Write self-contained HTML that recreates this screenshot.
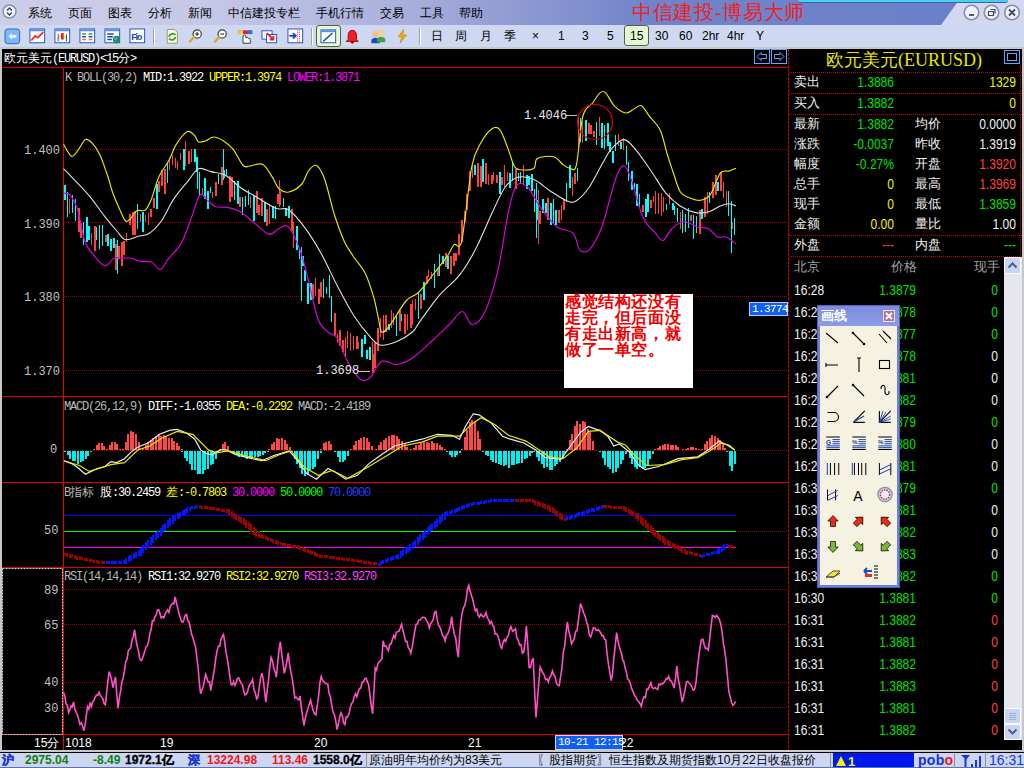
<!DOCTYPE html>
<html><head><meta charset="utf-8">
<style>
*{margin:0;padding:0;box-sizing:border-box}
html,body{width:1024px;height:768px;overflow:hidden;background:#000;font-family:"Liberation Sans",sans-serif}
.a{position:absolute;white-space:nowrap}
.mono{font-family:"Liberation Mono",monospace}
#menubar{position:absolute;left:0;top:0;width:1024px;height:25px;background:linear-gradient(90deg,#cccee8 0px,#c6c8e6 200px,#aab0dc 400px,#8a96d0 540px,#7084ca 650px,#6a80ca 940px);}
#menucut{position:absolute;left:0;top:0;width:1024px;height:25px;background:#d2d8f0;clip-path:polygon(959px 0,1024px 0,1024px 25px,941px 25px)}
#cyanbar{position:absolute;left:798px;top:0;width:210px;height:3px;background:#48d0f0;border-bottom:1px solid #4060a8;border-radius:0 0 3px 3px}
#toolbar{position:absolute;left:0;top:25px;width:1024px;height:22px;background:#ced8f0}
.menu{position:absolute;top:5px;font-size:12px;color:#000;line-height:16px}
.tb{position:absolute;top:29px;font-size:12px;color:#000;line-height:14px}
.sep{position:absolute;top:28px;width:2px;height:17px;border-left:1px solid #a0a0b8;border-right:1px solid #fff}
#frame{position:absolute;left:0;top:47px;width:1024px;height:705px;border-left:2px solid #c8c8c8;border-top:2px solid #c8c8c8;border-right:2px solid #c8c8c8;border-bottom:2px solid #c8c8c8}
.lab{position:absolute;font-family:"Liberation Mono",monospace;font-size:12px;color:#c0c0c0;line-height:12px}
.ttl{position:absolute;font-family:"Liberation Mono",monospace;font-size:12px;line-height:12px;letter-spacing:-1.2px;white-space:pre}
.cj{font-size:12px;letter-spacing:0;font-family:"Liberation Sans",sans-serif}
.rp{position:absolute;font-size:13px;line-height:14px}
.rv{position:absolute;font-size:14px;line-height:14px;text-align:right;transform:scaleX(0.86);transform-origin:right center}
.rt{position:absolute;font-size:14px;line-height:14px;transform:scaleX(0.86);transform-origin:left center}
#status{position:absolute;left:0;top:753px;width:1024px;height:15px;background:#cdd6f0;border-bottom:1px solid #6070a8}
.st{position:absolute;top:753px;font-size:12px;line-height:15px;font-weight:bold}
</style></head><body>
<div id="menubar"></div>
<div id="menucut"></div>
<div id="cyanbar"></div>
<div id="toolbar"></div>
<!-- menu items -->
<svg class="a" style="left:2px;top:4px" width="16" height="16"><circle cx="7.5" cy="7.5" r="6.5" fill="#f4f4fa" stroke="#8890b0" stroke-width="1.5"/><path d="M5 6.5 L7.5 4 L10 6.5 M5 8.5 L7.5 11 L10 8.5" fill="none" stroke="#304080" stroke-width="1.4"/></svg>
<div class="menu" style="left:28px">系统</div>
<div class="menu" style="left:68px">页面</div>
<div class="menu" style="left:108px">图表</div>
<div class="menu" style="left:148px">分析</div>
<div class="menu" style="left:188px">新闻</div>
<div class="menu" style="left:228px">中信建投专栏</div>
<div class="menu" style="left:316px">手机行情</div>
<div class="menu" style="left:380px">交易</div>
<div class="menu" style="left:420px">工具</div>
<div class="menu" style="left:459px">帮助</div>
<div class="a" style="left:632px;top:1px;font-family:'Liberation Serif',serif;font-size:20px;line-height:22px;color:#f02020;letter-spacing:0.7px">中信建投-博易大师</div>
<!-- window buttons -->
<svg class="a" style="left:962px;top:4px" width="62" height="18">
<g fill="#f0f0f4" stroke="#8a8fa8" stroke-width="1.6"><circle cx="9.5" cy="8.5" r="7.3"/><circle cx="29.5" cy="8.5" r="7.3"/><circle cx="50" cy="8.5" r="7.3"/></g>
<path d="M7 11h5" stroke="#404868" stroke-width="1.8"/>
<path d="M26.5 7.5h5v4h-5z M28.5 5.5h4.5v4" fill="none" stroke="#404868" stroke-width="1.2"/>
<path d="M47 5.5l6 6 M53 5.5l-6 6" stroke="#404868" stroke-width="1.8"/>
</svg>
<!-- toolbar -->
<svg class="a" style="left:4px;top:28px" width="17" height="17" viewBox="0 0 17 17"><g transform="translate(0.5 0.5) scale(0.92)"><rect x="0.5" y="0.5" width="16" height="16" rx="3" fill="#80b8f0" stroke="#3060b0"/><path d="M4 8.5L8 5V7H13V10H8V12Z" fill="#e8f4ff"/></g></svg>
<svg class="a" style="left:29px;top:28px" width="17" height="17" viewBox="0 0 17 17"><g transform="translate(0.5 0.5) scale(0.92)"><rect x="0.5" y="0.5" width="16" height="15" fill="#fff" stroke="#1848c0"/><rect x="1" y="1" width="15" height="2" fill="#5890e0"/><path d="M2 13L6 8L9 10L15 4" fill="none" stroke="#f02020" stroke-width="1.8"/></g></svg>
<svg class="a" style="left:54px;top:28px" width="17" height="17" viewBox="0 0 17 17"><g transform="translate(0.5 0.5) scale(0.92)"><rect x="0.5" y="0.5" width="16" height="15" fill="#fff" stroke="#1848c0"/><rect x="1" y="1" width="15" height="2" fill="#5890e0"/><path d="M3 12C6 7 11 7 14 12" stroke="#f0e000" fill="none" stroke-width="1.3"/><rect x="7" y="5" width="3" height="7" fill="#f02020"/><path d="M4 6V14M13 6V14" stroke="#1848c0"/></g></svg>
<svg class="a" style="left:79px;top:28px" width="17" height="17" viewBox="0 0 17 17"><g transform="translate(0.5 0.5) scale(0.92)"><rect x="0.5" y="0.5" width="16" height="15" fill="#fff" stroke="#1848c0"/><rect x="1" y="1" width="15" height="2" fill="#5890e0"/><path d="M3 6H7M10 6H14" stroke="#30a030" stroke-width="1.5"/><path d="M3 9H7M10 9H14" stroke="#1848c0" stroke-width="1.5"/><path d="M3 12H7M10 12H14" stroke="#f07020" stroke-width="1.5"/></g></svg>
<svg class="a" style="left:104px;top:28px" width="17" height="17" viewBox="0 0 17 17"><g transform="translate(0.5 0.5) scale(0.92)"><rect x="0.5" y="0.5" width="16" height="15" fill="#fff" stroke="#1848c0"/><rect x="1" y="1" width="15" height="2" fill="#5890e0"/><path d="M3 6H10M3 9H9M3 12H8" stroke="#1848c0" stroke-width="1.5"/><circle cx="13" cy="12" r="4" fill="#209040"/><circle cx="12" cy="11" r="2" fill="#40a0f0"/></g></svg>
<svg class="a" style="left:129px;top:28px" width="17" height="17" viewBox="0 0 17 17"><g transform="translate(0.5 0.5) scale(0.92)"><rect x="0.5" y="0.5" width="16" height="15" fill="#fff" stroke="#1848c0"/><text x="2" y="13" font-size="10" font-weight="bold" fill="#1848c0" font-family="Liberation Sans" textLength="12">Fio</text></g></svg>
<svg class="a" style="left:164px;top:28px" width="17" height="17" viewBox="0 0 17 17"><g transform="translate(0.5 0.5) scale(0.92)"><path d="M3 1H11L14 4V16H3Z" fill="#fff8e0" stroke="#a09060"/><path d="M5 9A4 4 0 0 1 12 7M12 9A4 4 0 0 1 5 11" fill="none" stroke="#30a030" stroke-width="2"/></g></svg>
<svg class="a" style="left:187px;top:28px" width="17" height="17" viewBox="0 0 17 17"><g transform="translate(0.5 0.5) scale(0.92)"><circle cx="10.5" cy="6" r="4.5" fill="#fff" stroke="#404040" stroke-width="1.3"/><path d="M8.5 6H12.5M10.5 4V8" stroke="#000"/><path d="M7.5 9L2 15" stroke="#e0a020" stroke-width="2.5"/></g></svg>
<svg class="a" style="left:212px;top:28px" width="17" height="17" viewBox="0 0 17 17"><g transform="translate(0.5 0.5) scale(0.92)"><circle cx="10.5" cy="6" r="4.5" fill="#fff" stroke="#404040" stroke-width="1.3"/><path d="M8.5 6H12.5" stroke="#000"/><path d="M7.5 9L2 15" stroke="#e0a020" stroke-width="2.5"/></g></svg>
<svg class="a" style="left:237px;top:28px" width="17" height="17" viewBox="0 0 17 17"><g transform="translate(0.5 0.5) scale(0.92)"><rect x="1" y="2" width="15" height="4" fill="#f02020"/><rect x="1" y="2" width="5" height="4" fill="#f0d040"/><rect x="11" y="2" width="5" height="4" fill="#3070e0"/><path d="M6 16V8Q8 6 9 8V10Q11 9 12 11Q14 10 14 12V16Z" fill="#fff" stroke="#303030"/></g></svg>
<svg class="a" style="left:261px;top:28px" width="17" height="17" viewBox="0 0 17 17"><g transform="translate(0.5 0.5) scale(0.92)"><rect x="0.5" y="2.5" width="11" height="9" fill="#fff" stroke="#1848c0"/><rect x="5.5" y="6.5" width="11" height="9" fill="#fff" stroke="#1848c0"/><path d="M6 5L13 12M13 8V12H9" stroke="#f02020" stroke-width="2" fill="none"/></g></svg>
<svg class="a" style="left:287px;top:28px" width="17" height="17" viewBox="0 0 17 17"><g transform="translate(0.5 0.5) scale(0.92)"><rect x="0.5" y="0.5" width="16" height="15" fill="#fff" stroke="#1848c0"/><path d="M11 2V15M13 2V15" stroke="#f02020" stroke-dasharray="1 1"/><path d="M2 8H9M6 5L9 8L6 11" stroke="#1848c0" stroke-width="2" fill="none"/></g></svg>
<div class="a" style="left:316px;top:25px;width:25px;height:22px;background:#e4f8d4;border:1px solid #506048;border-radius:3px"></div>
<svg class="a" style="left:320px;top:28px" width="17" height="17" viewBox="0 0 17 17"><g transform="translate(0.5 0.5) scale(0.92)"><rect x="0.5" y="1.5" width="16" height="14" fill="#fff" stroke="#1848c0"/><rect x="1" y="2" width="15" height="2" fill="#5890e0"/><path d="M3 14L13 5" stroke="#1848c0" stroke-width="1.5"/></g></svg>
<svg class="a" style="left:344px;top:28px" width="17" height="17" viewBox="0 0 17 17"><g transform="translate(0.5 0.5) scale(0.92)"><path d="M8.5 2C12 2 13 5 13 8V12L15 14H2L4 12V8C4 5 5 2 8.5 2Z" fill="#f02020" stroke="#a00000"/><circle cx="8.5" cy="15" r="1.5" fill="#a00000"/></g></svg>
<svg class="a" style="left:370px;top:28px" width="17" height="17" viewBox="0 0 17 17"><g transform="translate(0.5 0.5) scale(0.92)"><circle cx="5.5" cy="6" r="3.5" fill="#f0c090"/><path d="M1 16V12Q5.5 8 10 12V16Z" fill="#1848c0"/><circle cx="11.5" cy="5" r="3.5" fill="#f0d0a0"/><path d="M7 15V11Q11.5 7 16 11V15Z" fill="#40a040"/></g></svg>
<svg class="a" style="left:394px;top:28px" width="17" height="17" viewBox="0 0 17 17"><g transform="translate(0.5 0.5) scale(0.92)"><path d="M10 1L4 9H8L6 16L13 7H9Z" fill="#f0b000" stroke="#c07000" stroke-width="0.6"/></g></svg>
<div class="tb" style="left:431px">日</div>
<div class="tb" style="left:455px">周</div>
<div class="tb" style="left:480px">月</div>
<div class="tb" style="left:504px">季</div>
<div class="tb" style="left:532px">×</div>
<div class="tb" style="left:558px">1</div>
<div class="tb" style="left:582px">3</div>
<div class="tb" style="left:607px">5</div>
<div class="a" style="left:624px;top:25px;width:25px;height:21px;background:#e4f8d4;border:1px solid #50604a;border-radius:3px"></div>
<div class="tb" style="left:630px">15</div>
<div class="tb" style="left:655px">30</div>
<div class="tb" style="left:679px">60</div>
<div class="tb" style="left:702px">2hr</div>
<div class="tb" style="left:727px">4hr</div>
<div class="tb" style="left:756px">Y</div>
<div class="sep" style="left:153px"></div>
<div class="sep" style="left:311px"></div>
<div class="sep" style="left:419px"></div>
<div id="frame"></div>
<svg width="1024" height="768" style="position:absolute;left:0;top:0"><line x1="64" y1="149.5" x2="788" y2="149.5" stroke="#a00000" stroke-dasharray="1 1"/><line x1="64" y1="222.5" x2="788" y2="222.5" stroke="#a00000" stroke-dasharray="1 1"/><line x1="64" y1="296.5" x2="788" y2="296.5" stroke="#a00000" stroke-dasharray="1 1"/><line x1="64" y1="370.5" x2="788" y2="370.5" stroke="#a00000" stroke-dasharray="1 1"/><line x1="64" y1="450.5" x2="788" y2="450.5" stroke="#a00000" stroke-dasharray="1 1"/><line x1="736" y1="531.5" x2="788" y2="531.5" stroke="#a00000" stroke-dasharray="1 1"/><line x1="64" y1="589.5" x2="788" y2="589.5" stroke="#a00000" stroke-dasharray="1 1"/><line x1="64" y1="624.5" x2="788" y2="624.5" stroke="#a00000" stroke-dasharray="1 1"/><line x1="64" y1="682.5" x2="788" y2="682.5" stroke="#a00000" stroke-dasharray="1 1"/><line x1="64" y1="707.5" x2="788" y2="707.5" stroke="#a00000" stroke-dasharray="1 1"/><line x1="64" y1="515.5" x2="736" y2="515.5" stroke="#0000ff"/><line x1="64" y1="531.5" x2="736" y2="531.5" stroke="#00ff00"/><line x1="64" y1="547.5" x2="736" y2="547.5" stroke="#ff00ff"/><line x1="2" y1="67.5" x2="788" y2="67.5" stroke="#e00000"/><line x1="2" y1="396.5" x2="788" y2="396.5" stroke="#e00000"/><line x1="2" y1="482.5" x2="788" y2="482.5" stroke="#e00000"/><line x1="2" y1="567.5" x2="788" y2="567.5" stroke="#e00000"/><line x1="2" y1="734.5" x2="788" y2="734.5" stroke="#e00000"/><line x1="63.5" y1="67" x2="63.5" y2="750" stroke="#e80000"/><line x1="788.5" y1="49" x2="788.5" y2="750" stroke="#d00000" stroke-dasharray="3 1"/><rect x="64" y="185" width="2" height="15" fill="#00ffff"/><rect x="67" y="192" width="1" height="25" fill="#00ffff"/><rect x="69" y="199" width="1" height="15" fill="#ff4040"/><rect x="72" y="195" width="1" height="18" fill="#00ffff"/><rect x="75" y="199" width="1" height="22" fill="#00ffff"/><rect x="78" y="208" width="2" height="24" fill="#ff4040"/><rect x="80" y="223" width="2" height="15" fill="#ff4040"/><rect x="83" y="222" width="1" height="23" fill="#00ffff"/><rect x="86" y="217" width="2" height="25" fill="#00ffff"/><rect x="88" y="226" width="2" height="14" fill="#00ffff"/><rect x="91" y="233" width="1" height="12" fill="#ff4040"/><rect x="94" y="226" width="2" height="25" fill="#ff4040"/><rect x="96" y="227" width="1" height="13" fill="#00ffff"/><rect x="99" y="225" width="1" height="24" fill="#00ffff"/><rect x="102" y="225" width="1" height="21" fill="#00ffff"/><rect x="105" y="235" width="2" height="7" fill="#ff4040"/><rect x="107" y="234" width="2" height="12" fill="#00ffff"/><rect x="110" y="239" width="2" height="12" fill="#00ffff"/><rect x="113" y="238" width="2" height="10" fill="#00ffff"/><rect x="115" y="244" width="2" height="26" fill="#ff4040"/><rect x="118" y="246" width="2" height="13" fill="#ff4040"/><rect x="121" y="242" width="2" height="24" fill="#ff4040"/><rect x="123" y="241" width="2" height="14" fill="#ff4040"/><rect x="126" y="233" width="1" height="9" fill="#ff4040"/><rect x="129" y="214" width="2" height="11" fill="#ff4040"/><rect x="132" y="212" width="2" height="23" fill="#ff4040"/><rect x="134" y="211" width="2" height="24" fill="#ff4040"/><rect x="137" y="204" width="1" height="25" fill="#00ffff"/><rect x="140" y="214" width="1" height="8" fill="#ff4040"/><rect x="142" y="212" width="2" height="20" fill="#00ffff"/><rect x="145" y="215" width="1" height="7" fill="#ff4040"/><rect x="148" y="213" width="1" height="12" fill="#ff4040"/><rect x="150" y="209" width="2" height="8" fill="#ff4040"/><rect x="153" y="198" width="2" height="10" fill="#ff4040"/><rect x="156" y="184" width="2" height="25" fill="#00ffff"/><rect x="158" y="181" width="2" height="11" fill="#ff4040"/><rect x="161" y="170" width="2" height="16" fill="#ff4040"/><rect x="164" y="169" width="2" height="25" fill="#ff4040"/><rect x="167" y="163" width="1" height="20" fill="#00ffff"/><rect x="169" y="160" width="1" height="10" fill="#ff4040"/><rect x="172" y="155" width="1" height="10" fill="#ff4040"/><rect x="175" y="158" width="1" height="10" fill="#ff4040"/><rect x="177" y="161" width="1" height="9" fill="#ff4040"/><rect x="180" y="153" width="1" height="7" fill="#ff4040"/><rect x="183" y="149" width="2" height="21" fill="#00ffff"/><rect x="185" y="141" width="1" height="25" fill="#ff4040"/><rect x="188" y="151" width="2" height="13" fill="#ff4040"/><rect x="191" y="149" width="1" height="13" fill="#ff4040"/><rect x="194" y="149" width="2" height="13" fill="#00ffff"/><rect x="196" y="157" width="2" height="15" fill="#00ffff"/><rect x="199" y="172" width="1" height="24" fill="#00ffff"/><rect x="202" y="188" width="1" height="7" fill="#ff4040"/><rect x="204" y="178" width="2" height="21" fill="#00ffff"/><rect x="207" y="191" width="2" height="18" fill="#00ffff"/><rect x="210" y="187" width="1" height="6" fill="#00ffff"/><rect x="212" y="192" width="1" height="6" fill="#ff4040"/><rect x="215" y="182" width="2" height="14" fill="#ff4040"/><rect x="218" y="174" width="1" height="10" fill="#00ffff"/><rect x="221" y="167" width="2" height="18" fill="#ff4040"/><rect x="223" y="170" width="2" height="8" fill="#00ffff"/><rect x="226" y="169" width="1" height="7" fill="#00ffff"/><rect x="229" y="176" width="2" height="26" fill="#ff4040"/><rect x="231" y="177" width="2" height="20" fill="#ff4040"/><rect x="234" y="181" width="1" height="19" fill="#00ffff"/><rect x="237" y="181" width="2" height="23" fill="#00ffff"/><rect x="239" y="197" width="2" height="10" fill="#ff4040"/><rect x="242" y="197" width="1" height="18" fill="#00ffff"/><rect x="245" y="196" width="1" height="11" fill="#00ffff"/><rect x="248" y="190" width="1" height="15" fill="#00ffff"/><rect x="250" y="196" width="1" height="12" fill="#ff4040"/><rect x="253" y="196" width="2" height="25" fill="#00ffff"/><rect x="256" y="191" width="2" height="22" fill="#ff4040"/><rect x="258" y="205" width="2" height="10" fill="#ff4040"/><rect x="261" y="198" width="2" height="18" fill="#ff4040"/><rect x="264" y="202" width="2" height="20" fill="#00ffff"/><rect x="266" y="209" width="2" height="17" fill="#ff4040"/><rect x="269" y="205" width="1" height="19" fill="#ff4040"/><rect x="272" y="206" width="2" height="12" fill="#00ffff"/><rect x="275" y="206" width="1" height="13" fill="#00ffff"/><rect x="277" y="194" width="2" height="10" fill="#ff4040"/><rect x="280" y="191" width="1" height="14" fill="#ff4040"/><rect x="283" y="198" width="1" height="9" fill="#00ffff"/><rect x="285" y="208" width="2" height="8" fill="#00ffff"/><rect x="288" y="206" width="2" height="12" fill="#00ffff"/><rect x="291" y="209" width="2" height="22" fill="#ff4040"/><rect x="293" y="222" width="1" height="26" fill="#ff4040"/><rect x="296" y="226" width="2" height="24" fill="#00ffff"/><rect x="299" y="249" width="1" height="10" fill="#00ffff"/><rect x="302" y="256" width="2" height="10" fill="#00ffff"/><rect x="304" y="270" width="2" height="11" fill="#00ffff"/><rect x="307" y="283" width="2" height="21" fill="#00ffff"/><rect x="310" y="283" width="2" height="17" fill="#00ffff"/><rect x="312" y="284" width="2" height="15" fill="#ff4040"/><rect x="315" y="278" width="1" height="18" fill="#ff4040"/><rect x="318" y="289" width="2" height="15" fill="#ff4040"/><rect x="320" y="282" width="2" height="15" fill="#ff4040"/><rect x="323" y="279" width="1" height="19" fill="#00ffff"/><rect x="326" y="287" width="1" height="7" fill="#00ffff"/><rect x="329" y="275" width="1" height="23" fill="#00ffff"/><rect x="331" y="296" width="1" height="26" fill="#00ffff"/><rect x="334" y="313" width="2" height="22" fill="#ff4040"/><rect x="337" y="334" width="1" height="9" fill="#ff4040"/><rect x="339" y="330" width="2" height="16" fill="#ff4040"/><rect x="342" y="340" width="2" height="12" fill="#ff4040"/><rect x="345" y="337" width="1" height="20" fill="#ff4040"/><rect x="347" y="331" width="1" height="17" fill="#ff4040"/><rect x="350" y="333" width="1" height="18" fill="#ff4040"/><rect x="353" y="336" width="1" height="14" fill="#ff4040"/><rect x="356" y="336" width="2" height="13" fill="#ff4040"/><rect x="358" y="342" width="1" height="7" fill="#ff4040"/><rect x="361" y="339" width="2" height="18" fill="#00ffff"/><rect x="364" y="335" width="2" height="9" fill="#00ffff"/><rect x="366" y="350" width="2" height="9" fill="#00ffff"/><rect x="369" y="347" width="2" height="13" fill="#00ffff"/><rect x="372" y="354" width="2" height="18" fill="#ff4040"/><rect x="374" y="343" width="2" height="25" fill="#ff4040"/><rect x="377" y="328" width="2" height="23" fill="#ff4040"/><rect x="380" y="318" width="1" height="19" fill="#ff4040"/><rect x="383" y="315" width="1" height="25" fill="#ff4040"/><rect x="385" y="315" width="2" height="17" fill="#ff4040"/><rect x="388" y="324" width="2" height="6" fill="#00ffff"/><rect x="391" y="310" width="1" height="18" fill="#ff4040"/><rect x="393" y="313" width="1" height="12" fill="#ff4040"/><rect x="396" y="316" width="1" height="20" fill="#00ffff"/><rect x="399" y="310" width="2" height="21" fill="#ff4040"/><rect x="401" y="314" width="1" height="7" fill="#00ffff"/><rect x="404" y="314" width="2" height="20" fill="#ff4040"/><rect x="407" y="314" width="1" height="16" fill="#ff4040"/><rect x="410" y="304" width="2" height="24" fill="#ff4040"/><rect x="412" y="300" width="1" height="25" fill="#ff4040"/><rect x="415" y="299" width="1" height="11" fill="#ff4040"/><rect x="418" y="293" width="1" height="26" fill="#00ffff"/><rect x="420" y="294" width="2" height="15" fill="#ff4040"/><rect x="423" y="282" width="2" height="18" fill="#00ffff"/><rect x="426" y="276" width="2" height="8" fill="#ff4040"/><rect x="428" y="270" width="1" height="7" fill="#ff4040"/><rect x="431" y="272" width="1" height="7" fill="#ff4040"/><rect x="434" y="264" width="1" height="24" fill="#00ffff"/><rect x="437" y="268" width="2" height="8" fill="#ff4040"/><rect x="439" y="254" width="1" height="22" fill="#00ffff"/><rect x="442" y="256" width="2" height="8" fill="#00ffff"/><rect x="445" y="253" width="2" height="14" fill="#ff4040"/><rect x="447" y="256" width="2" height="13" fill="#00ffff"/><rect x="450" y="256" width="2" height="18" fill="#ff4040"/><rect x="453" y="253" width="2" height="13" fill="#ff4040"/><rect x="455" y="253" width="2" height="8" fill="#ff4040"/><rect x="458" y="234" width="2" height="21" fill="#ff4040"/><rect x="461" y="220" width="2" height="22" fill="#ff4040"/><rect x="464" y="211" width="2" height="11" fill="#ff4040"/><rect x="466" y="194" width="2" height="16" fill="#ff4040"/><rect x="469" y="171" width="2" height="20" fill="#ff4040"/><rect x="472" y="164" width="1" height="14" fill="#ff4040"/><rect x="474" y="165" width="2" height="10" fill="#00ffff"/><rect x="477" y="163" width="2" height="24" fill="#ff4040"/><rect x="480" y="166" width="2" height="21" fill="#ff4040"/><rect x="482" y="159" width="2" height="23" fill="#00ffff"/><rect x="485" y="163" width="2" height="21" fill="#ff4040"/><rect x="488" y="174" width="1" height="11" fill="#ff4040"/><rect x="491" y="175" width="2" height="9" fill="#ff4040"/><rect x="493" y="172" width="1" height="9" fill="#ff4040"/><rect x="496" y="175" width="2" height="8" fill="#ff4040"/><rect x="499" y="172" width="2" height="22" fill="#00ffff"/><rect x="501" y="177" width="2" height="8" fill="#ff4040"/><rect x="504" y="165" width="1" height="22" fill="#ff4040"/><rect x="507" y="172" width="1" height="9" fill="#ff4040"/><rect x="509" y="173" width="2" height="15" fill="#00ffff"/><rect x="512" y="161" width="1" height="20" fill="#00ffff"/><rect x="515" y="169" width="2" height="20" fill="#ff4040"/><rect x="518" y="173" width="1" height="8" fill="#00ffff"/><rect x="520" y="172" width="1" height="11" fill="#00ffff"/><rect x="523" y="165" width="1" height="20" fill="#ff4040"/><rect x="526" y="175" width="2" height="14" fill="#00ffff"/><rect x="528" y="176" width="2" height="9" fill="#00ffff"/><rect x="531" y="174" width="2" height="17" fill="#00ffff"/><rect x="534" y="189" width="1" height="23" fill="#00ffff"/><rect x="536" y="200" width="2" height="20" fill="#00ffff"/><rect x="539" y="211" width="2" height="13" fill="#ff4040"/><rect x="542" y="199" width="2" height="14" fill="#00ffff"/><rect x="545" y="203" width="2" height="10" fill="#00ffff"/><rect x="547" y="198" width="2" height="22" fill="#ff4040"/><rect x="550" y="203" width="2" height="22" fill="#00ffff"/><rect x="553" y="199" width="1" height="25" fill="#00ffff"/><rect x="555" y="210" width="2" height="15" fill="#00ffff"/><rect x="558" y="210" width="2" height="13" fill="#ff4040"/><rect x="561" y="205" width="1" height="15" fill="#ff4040"/><rect x="563" y="199" width="2" height="11" fill="#ff4040"/><rect x="566" y="183" width="1" height="19" fill="#00ffff"/><rect x="569" y="165" width="2" height="23" fill="#00ffff"/><rect x="572" y="177" width="1" height="19" fill="#ff4040"/><rect x="574" y="173" width="2" height="11" fill="#ff4040"/><rect x="577" y="168" width="1" height="13" fill="#00ffff"/><rect x="580" y="118" width="1" height="24" fill="#00ffff"/><rect x="582" y="121" width="1" height="22" fill="#ff4040"/><rect x="585" y="120" width="2" height="21" fill="#00ffff"/><rect x="588" y="123" width="2" height="11" fill="#ff4040"/><rect x="590" y="125" width="2" height="9" fill="#ff4040"/><rect x="593" y="131" width="2" height="6" fill="#ff4040"/><rect x="596" y="122" width="1" height="23" fill="#00ffff"/><rect x="599" y="117" width="1" height="19" fill="#ff4040"/><rect x="601" y="123" width="2" height="25" fill="#00ffff"/><rect x="604" y="125" width="1" height="24" fill="#00ffff"/><rect x="607" y="123" width="2" height="23" fill="#00ffff"/><rect x="609" y="142" width="2" height="10" fill="#00ffff"/><rect x="612" y="151" width="2" height="12" fill="#00ffff"/><rect x="615" y="135" width="1" height="16" fill="#00ffff"/><rect x="618" y="134" width="1" height="12" fill="#ff4040"/><rect x="620" y="142" width="2" height="7" fill="#00ffff"/><rect x="623" y="138" width="1" height="12" fill="#ff4040"/><rect x="626" y="146" width="1" height="19" fill="#00ffff"/><rect x="628" y="162" width="1" height="19" fill="#00ffff"/><rect x="631" y="171" width="2" height="19" fill="#00ffff"/><rect x="634" y="183" width="1" height="7" fill="#00ffff"/><rect x="636" y="184" width="2" height="22" fill="#00ffff"/><rect x="639" y="194" width="1" height="14" fill="#00ffff"/><rect x="642" y="205" width="2" height="7" fill="#ff4040"/><rect x="645" y="199" width="2" height="18" fill="#00ffff"/><rect x="647" y="194" width="2" height="18" fill="#00ffff"/><rect x="650" y="200" width="2" height="8" fill="#ff4040"/><rect x="653" y="196" width="1" height="6" fill="#ff4040"/><rect x="655" y="191" width="1" height="23" fill="#ff4040"/><rect x="658" y="193" width="1" height="21" fill="#ff4040"/><rect x="661" y="193" width="1" height="23" fill="#ff4040"/><rect x="663" y="197" width="1" height="15" fill="#ff4040"/><rect x="666" y="204" width="1" height="6" fill="#00ffff"/><rect x="669" y="193" width="1" height="12" fill="#ff4040"/><rect x="672" y="203" width="2" height="7" fill="#00ffff"/><rect x="674" y="206" width="1" height="9" fill="#00ffff"/><rect x="677" y="208" width="1" height="14" fill="#00ffff"/><rect x="680" y="212" width="1" height="17" fill="#ff4040"/><rect x="682" y="210" width="1" height="23" fill="#00ffff"/><rect x="685" y="214" width="1" height="18" fill="#00ffff"/><rect x="688" y="208" width="1" height="20" fill="#00ffff"/><rect x="690" y="215" width="2" height="6" fill="#ff4040"/><rect x="693" y="215" width="1" height="24" fill="#00ffff"/><rect x="696" y="216" width="1" height="17" fill="#00ffff"/><rect x="699" y="210" width="2" height="24" fill="#ff4040"/><rect x="701" y="209" width="2" height="10" fill="#00ffff"/><rect x="704" y="197" width="2" height="20" fill="#ff4040"/><rect x="707" y="192" width="1" height="22" fill="#ff4040"/><rect x="709" y="192" width="1" height="11" fill="#00ffff"/><rect x="712" y="182" width="2" height="16" fill="#ff4040"/><rect x="715" y="175" width="2" height="20" fill="#ff4040"/><rect x="717" y="182" width="2" height="9" fill="#00ffff"/><rect x="720" y="172" width="2" height="19" fill="#ff4040"/><rect x="723" y="182" width="1" height="16" fill="#ff4040"/><rect x="726" y="191" width="1" height="16" fill="#ff4040"/><rect x="728" y="191" width="1" height="25" fill="#00ffff"/><rect x="731" y="222" width="2" height="7" fill="#ff4040"/><rect x="734" y="218" width="1" height="17" fill="#00ffff"/><rect x="117" y="240" width="1" height="34" fill="#00ffff"/><rect x="223" y="149" width="1" height="31" fill="#00ffff"/><rect x="197" y="168" width="1" height="21" fill="#00ffff"/><rect x="279" y="180" width="1" height="27" fill="#ff4040"/><rect x="536" y="183" width="1" height="55" fill="#00ffff"/><rect x="538" y="190" width="1" height="54" fill="#ff4040"/><rect x="372" y="342" width="1" height="31" fill="#ff4040"/><rect x="731" y="201" width="1" height="52" fill="#00ffff"/><rect x="578" y="115" width="1" height="35" fill="#ff4040"/><rect x="301" y="247" width="1" height="54" fill="#00ffff"/><path d="M63.5,144.0C64.8,146.1 69.1,155.4 71.6,156.3C74.1,157.2 76.3,152.2 78.6,149.4C80.9,146.6 83.2,140.5 85.5,139.5C87.8,138.5 89.9,140.7 92.2,143.2C94.5,145.7 97.1,149.2 99.6,154.3C102.1,159.4 104.7,167.4 107.0,174.0C109.3,180.6 111.1,188.2 113.2,194.0C115.3,199.8 117.3,204.3 119.4,208.8C121.5,213.3 123.8,219.4 125.6,221.0C127.4,222.6 128.7,220.3 130.5,218.6C132.3,216.9 134.2,212.1 136.7,210.7C139.2,209.3 142.9,212.0 145.4,210.0C147.9,208.0 149.2,204.5 151.5,198.9C153.8,193.3 156.1,183.0 159.0,176.6C161.9,170.2 166.0,165.9 168.9,160.5C171.8,155.1 173.2,149.2 176.3,144.4C179.4,139.6 184.3,133.0 187.4,131.6C190.5,130.2 193.0,134.1 194.8,135.8C196.7,137.5 196.6,141.2 198.5,142.0C200.4,142.8 203.5,141.5 206.0,140.7C208.5,139.9 210.5,137.0 213.4,137.0C216.3,137.0 220.0,138.6 223.3,140.7C226.6,142.8 229.9,145.3 233.2,149.4C236.5,153.5 240.3,162.7 243.1,165.5C245.9,168.3 246.5,166.2 249.8,166.0C253.1,165.8 259.0,162.5 262.8,164.4C266.6,166.3 269.8,173.3 272.5,177.4C275.2,181.5 276.3,186.4 279.0,188.8C281.7,191.2 285.0,192.8 288.8,192.0C292.6,191.2 298.6,187.5 301.8,184.0C305.1,180.5 305.9,174.1 308.3,171.0C310.8,167.9 313.8,164.1 316.5,165.4C319.2,166.7 321.6,170.8 324.6,179.0C327.6,187.2 331.1,204.5 334.4,214.8C337.6,225.1 340.9,233.8 344.1,240.9C347.4,248.0 350.4,251.8 353.9,257.2C357.4,262.6 362.1,266.9 365.3,273.4C368.6,279.9 371.2,288.9 373.4,296.2C375.6,303.5 376.9,311.4 378.3,317.4C379.7,323.4 379.7,330.6 381.6,332.0C383.5,333.4 385.6,330.7 389.7,325.5C393.8,320.3 401.1,306.6 406.0,301.0C410.9,295.4 414.2,296.8 419.0,292.0C423.8,287.2 429.9,278.6 434.7,272.5C439.5,266.4 444.5,260.2 447.7,255.6C450.9,250.9 452.1,246.1 454.0,244.6C455.9,243.1 457.7,247.3 459.0,246.5C460.3,245.7 460.9,245.4 462.0,240.0C463.1,234.6 463.9,226.3 465.6,213.8C467.3,201.3 469.7,176.7 472.1,165.0C474.6,153.3 477.0,149.7 480.3,143.7C483.6,137.7 488.4,131.3 491.7,129.0C494.9,126.7 497.1,126.4 499.8,129.7C502.5,133.0 505.6,142.5 508.0,148.6C510.4,154.7 512.3,163.0 514.5,166.5C516.7,170.0 517.8,169.5 521.0,169.8C524.2,170.1 531.3,170.1 534.0,168.2C536.7,166.3 534.0,160.3 537.3,158.4C540.5,156.5 549.2,155.7 553.5,156.8C557.8,157.9 560.6,163.0 563.3,164.9C566.0,166.8 567.6,168.2 569.8,168.2C572.0,168.2 574.2,173.7 576.4,165.0C578.6,156.3 580.2,126.3 582.9,116.0C585.6,105.7 589.8,106.8 592.6,103.0C595.5,99.2 597.8,94.6 600.0,92.9C602.2,91.2 603.3,90.8 605.7,92.9C608.1,95.1 610.9,102.5 614.3,105.8C617.6,109.1 622.4,112.5 625.8,113.0C629.1,113.5 631.8,109.9 634.4,108.7C637.0,107.5 638.9,104.4 641.5,105.8C644.1,107.2 647.0,113.2 650.1,117.2C653.2,121.2 657.3,123.9 660.2,130.1C663.1,136.3 665.2,147.6 667.3,154.5C669.4,161.4 670.9,165.5 673.0,171.7C675.1,177.9 677.6,187.4 680.2,191.7C682.8,196.0 685.4,196.1 688.8,197.5C692.1,198.9 696.7,200.8 700.3,200.3C703.9,199.8 707.0,199.1 710.3,194.6C713.6,190.1 717.2,177.0 720.3,173.1C723.4,169.2 726.3,171.9 728.9,171.1C731.5,170.3 734.9,168.8 736.1,168.3" fill="none" stroke="#e8e800" stroke-width="1.15"/><path d="M63.5,168.7C65.4,170.6 70.4,175.7 74.8,180.3C79.2,184.9 84.8,190.4 89.7,196.4C94.7,202.4 100.0,210.4 104.5,216.2C109.0,222.0 113.4,227.1 116.9,231.0C120.4,234.9 121.9,238.9 125.6,239.7C129.3,240.5 135.3,237.0 139.2,236.0C143.1,235.0 145.3,236.0 149.0,233.5C152.7,231.0 157.3,226.8 161.4,221.0C165.5,215.2 169.3,205.7 173.8,198.9C178.3,192.1 184.5,185.3 188.6,180.3C192.7,175.3 194.8,170.1 198.5,168.7C202.2,167.2 206.3,170.5 210.9,171.6C215.5,172.7 221.0,172.8 225.8,175.4C230.7,178.0 234.9,183.6 240.0,187.2C245.1,190.8 250.3,193.5 256.3,197.0C262.3,200.5 270.4,206.1 275.8,208.3C281.2,210.5 283.9,206.7 288.8,210.0C293.7,213.3 299.6,220.6 305.0,227.9C310.4,235.2 316.0,244.2 321.4,254.0C326.8,263.8 332.2,276.1 337.6,286.4C343.0,296.7 348.5,307.3 353.9,315.7C359.3,324.1 365.8,332.0 370.2,336.9C374.6,341.8 375.7,344.2 380.0,345.0C384.3,345.8 390.8,344.0 396.2,341.8C401.6,339.6 408.5,335.4 412.5,332.0C416.5,328.6 415.5,327.4 420.0,321.3C424.5,315.2 433.0,302.8 439.5,295.2C446.0,287.6 453.1,283.3 459.1,275.7C465.1,268.1 470.0,259.9 475.4,249.6C480.8,239.3 486.8,224.1 491.7,213.8C496.6,203.5 500.4,193.8 504.7,187.7C509.0,181.6 512.8,178.7 517.7,177.3C522.6,176.0 528.6,177.3 534.0,179.6C539.4,181.9 544.9,187.5 550.3,191.0C555.7,194.5 562.3,199.0 566.6,200.7C570.9,202.4 572.3,203.2 576.0,201.0C579.7,198.8 584.5,193.9 589.0,187.5C593.5,181.1 599.2,168.9 603.0,162.5C606.8,156.1 607.9,152.6 611.5,148.8C615.1,145.0 620.1,139.1 624.4,139.6C628.7,140.1 632.7,146.2 637.2,151.6C641.7,156.9 646.8,164.8 651.6,171.7C656.4,178.6 661.1,187.5 665.9,193.2C670.7,198.9 675.4,202.8 680.2,206.0C685.0,209.2 689.8,211.4 694.6,212.4C699.4,213.4 704.6,212.9 708.9,211.8C713.2,210.7 717.0,207.3 720.3,206.0C723.6,204.7 726.3,203.8 728.9,203.8C731.5,203.8 734.9,205.6 736.1,206.0" fill="none" stroke="#e0e0e0" stroke-width="1.1"/><path d="M63.5,193.4C64.6,193.7 67.6,192.4 69.9,195.0C72.2,197.6 74.8,201.1 77.3,208.8C79.8,216.5 82.2,233.6 84.7,241.0C87.2,248.4 88.9,249.2 92.2,253.3C95.5,257.4 100.8,264.9 104.5,265.7C108.2,266.5 111.1,259.4 114.4,258.2C117.7,256.9 121.4,258.2 124.3,258.2C127.2,258.2 129.2,257.7 131.7,258.2C134.2,258.7 135.9,260.6 139.2,261.2C142.5,261.8 148.0,260.6 151.5,262.0C155.0,263.4 157.3,270.0 160.2,269.4C163.1,268.8 165.4,262.5 168.9,258.2C172.4,253.9 177.5,250.0 181.2,243.4C184.9,236.8 188.0,226.7 191.1,218.6C194.2,210.5 196.9,198.0 199.8,195.1C202.7,192.2 205.7,199.4 208.4,201.3C211.1,203.2 212.6,205.8 215.9,206.8C219.2,207.8 224.2,206.7 228.2,207.5C232.2,208.3 235.3,208.8 240.0,211.6C244.7,214.4 251.4,220.8 256.3,224.6C261.2,228.4 265.5,233.8 269.3,234.4C273.1,235.1 275.8,229.7 279.0,228.5C282.2,227.3 285.3,223.5 288.8,227.2C292.3,230.9 296.9,241.8 300.2,250.6C303.4,259.4 305.3,268.6 308.3,280.0C311.3,291.4 314.7,310.3 318.0,319.0C321.3,327.7 324.6,328.8 327.9,332.0C331.2,335.2 334.4,333.6 337.6,338.5C340.9,343.4 343.6,354.5 347.4,361.3C351.2,368.1 356.6,376.5 360.4,379.2C364.2,381.9 366.7,380.5 370.2,377.5C373.7,374.5 377.3,363.5 381.6,361.3C385.9,359.1 391.1,365.1 396.2,364.5C401.3,363.9 406.4,362.1 412.5,358.0C418.6,353.9 426.9,345.6 433.0,340.0C439.1,334.4 444.4,329.2 449.3,324.5C454.2,319.8 458.5,311.5 462.3,311.5C466.1,311.5 468.3,324.5 472.1,324.5C475.9,324.5 480.8,320.7 485.1,311.5C489.5,302.3 494.4,285.5 498.2,269.2C502.0,252.9 505.0,227.7 508.0,213.8C511.0,199.9 512.9,190.5 516.1,186.0C519.4,181.5 523.4,183.4 527.5,187.0C531.6,190.6 535.6,200.7 540.5,207.3C545.4,213.9 551.4,222.5 556.8,226.8C562.2,231.1 569.3,229.5 573.1,233.3C576.9,237.1 576.9,246.9 579.6,249.6C582.3,252.3 585.8,253.0 589.4,249.6C593.0,246.2 597.6,237.3 601.0,229.0C604.4,220.7 606.9,209.1 609.6,200.0C612.3,190.9 614.7,180.3 617.2,174.6C619.7,168.9 622.0,165.1 624.4,166.0C626.8,166.9 628.4,171.7 631.5,180.3C634.6,188.9 639.2,208.9 643.0,217.5C646.8,226.1 651.1,228.1 654.4,231.9C657.7,235.7 660.1,241.0 663.0,240.5C665.9,240.0 668.2,232.1 671.6,229.0C675.0,225.9 678.8,222.2 683.1,221.8C687.4,221.4 693.1,225.5 697.4,226.7C701.7,227.9 705.5,227.3 708.9,229.0C712.2,230.7 714.6,235.7 717.5,237.0C720.4,238.3 723.0,235.8 726.1,237.0C729.2,238.2 734.4,242.8 736.1,243.9" fill="none" stroke="#e000e0" stroke-width="1.15"/><circle cx="595" cy="122" r="17.5" fill="none" stroke="#e00000" stroke-width="1.2"/><line x1="566" y1="115.5" x2="577" y2="115.5" stroke="#c0c0c0"/><line x1="358" y1="371.5" x2="370" y2="371.5" stroke="#c0c0c0"/><rect x="64" y="451" width="2" height="1" fill="#00f0f0"/><rect x="67" y="451" width="2" height="4" fill="#00f0f0"/><rect x="69" y="451" width="2" height="8" fill="#00f0f0"/><rect x="72" y="451" width="2" height="10" fill="#00f0f0"/><rect x="74" y="451" width="2" height="10" fill="#00f0f0"/><rect x="77" y="451" width="2" height="13" fill="#00f0f0"/><rect x="80" y="451" width="2" height="11" fill="#00f0f0"/><rect x="82" y="451" width="2" height="10" fill="#00f0f0"/><rect x="85" y="451" width="2" height="8" fill="#00f0f0"/><rect x="87" y="451" width="2" height="5" fill="#00f0f0"/><rect x="90" y="451" width="2" height="1" fill="#00f0f0"/><rect x="93" y="449" width="2" height="1" fill="#ff4848"/><rect x="96" y="445" width="2" height="5" fill="#ff4848"/><rect x="98" y="443" width="2" height="7" fill="#ff4848"/><rect x="101" y="443" width="2" height="7" fill="#ff4848"/><rect x="103" y="446" width="2" height="4" fill="#ff4848"/><rect x="106" y="449" width="2" height="1" fill="#ff4848"/><rect x="109" y="445" width="2" height="5" fill="#ff4848"/><rect x="111" y="442" width="2" height="8" fill="#ff4848"/><rect x="114" y="442" width="2" height="8" fill="#ff4848"/><rect x="116" y="444" width="2" height="6" fill="#ff4848"/><rect x="119" y="449" width="2" height="1" fill="#ff4848"/><rect x="122" y="449" width="2" height="1" fill="#ff4848"/><rect x="125" y="442" width="2" height="8" fill="#ff4848"/><rect x="127" y="434" width="2" height="16" fill="#ff4848"/><rect x="130" y="431" width="2" height="19" fill="#ff4848"/><rect x="132" y="432" width="2" height="18" fill="#ff4848"/><rect x="135" y="434" width="2" height="16" fill="#ff4848"/><rect x="138" y="442" width="2" height="8" fill="#ff4848"/><rect x="142" y="449" width="2" height="1" fill="#ff4848"/><rect x="145" y="445" width="2" height="5" fill="#ff4848"/><rect x="147" y="442" width="2" height="8" fill="#ff4848"/><rect x="150" y="440" width="2" height="10" fill="#ff4848"/><rect x="152" y="438" width="2" height="12" fill="#ff4848"/><rect x="155" y="436" width="2" height="14" fill="#ff4848"/><rect x="158" y="434" width="2" height="16" fill="#ff4848"/><rect x="160" y="436" width="2" height="14" fill="#ff4848"/><rect x="163" y="435" width="2" height="15" fill="#ff4848"/><rect x="165" y="436" width="2" height="14" fill="#ff4848"/><rect x="168" y="438" width="2" height="12" fill="#ff4848"/><rect x="171" y="438" width="2" height="12" fill="#ff4848"/><rect x="173" y="441" width="2" height="9" fill="#ff4848"/><rect x="176" y="443" width="2" height="7" fill="#ff4848"/><rect x="178" y="446" width="2" height="4" fill="#ff4848"/><rect x="181" y="449" width="2" height="1" fill="#ff4848"/><rect x="181" y="451" width="2" height="1" fill="#00f0f0"/><rect x="184" y="451" width="2" height="7" fill="#00f0f0"/><rect x="186" y="451" width="2" height="10" fill="#00f0f0"/><rect x="189" y="451" width="2" height="13" fill="#00f0f0"/><rect x="191" y="451" width="2" height="19" fill="#00f0f0"/><rect x="194" y="451" width="2" height="19" fill="#00f0f0"/><rect x="197" y="451" width="2" height="23" fill="#00f0f0"/><rect x="199" y="451" width="2" height="23" fill="#00f0f0"/><rect x="202" y="451" width="2" height="23" fill="#00f0f0"/><rect x="204" y="451" width="2" height="19" fill="#00f0f0"/><rect x="207" y="451" width="2" height="18" fill="#00f0f0"/><rect x="210" y="451" width="2" height="14" fill="#00f0f0"/><rect x="212" y="451" width="2" height="13" fill="#00f0f0"/><rect x="215" y="451" width="2" height="8" fill="#00f0f0"/><rect x="217" y="451" width="2" height="2" fill="#00f0f0"/><rect x="219" y="449" width="2" height="1" fill="#ff4848"/><rect x="222" y="444" width="2" height="6" fill="#ff4848"/><rect x="224" y="442" width="2" height="8" fill="#ff4848"/><rect x="227" y="446" width="2" height="4" fill="#ff4848"/><rect x="228" y="451" width="2" height="1" fill="#00f0f0"/><rect x="231" y="451" width="2" height="2" fill="#00f0f0"/><rect x="233" y="451" width="2" height="3" fill="#00f0f0"/><rect x="236" y="451" width="2" height="4" fill="#00f0f0"/><rect x="238" y="451" width="2" height="6" fill="#00f0f0"/><rect x="241" y="451" width="2" height="6" fill="#00f0f0"/><rect x="244" y="451" width="2" height="6" fill="#00f0f0"/><rect x="246" y="451" width="2" height="8" fill="#00f0f0"/><rect x="249" y="451" width="2" height="7" fill="#00f0f0"/><rect x="251" y="451" width="2" height="7" fill="#00f0f0"/><rect x="254" y="451" width="2" height="6" fill="#00f0f0"/><rect x="257" y="451" width="2" height="6" fill="#00f0f0"/><rect x="259" y="451" width="2" height="5" fill="#00f0f0"/><rect x="262" y="451" width="2" height="4" fill="#00f0f0"/><rect x="264" y="451" width="2" height="2" fill="#00f0f0"/><rect x="267" y="451" width="2" height="1" fill="#00f0f0"/><rect x="268" y="449" width="2" height="1" fill="#ff4848"/><rect x="271" y="444" width="2" height="6" fill="#ff4848"/><rect x="273" y="442" width="2" height="8" fill="#ff4848"/><rect x="276" y="438" width="2" height="12" fill="#ff4848"/><rect x="278" y="439" width="2" height="11" fill="#ff4848"/><rect x="281" y="438" width="2" height="12" fill="#ff4848"/><rect x="284" y="440" width="2" height="10" fill="#ff4848"/><rect x="286" y="444" width="2" height="6" fill="#ff4848"/><rect x="289" y="447" width="2" height="3" fill="#ff4848"/><rect x="291" y="451" width="2" height="1" fill="#00f0f0"/><rect x="294" y="451" width="2" height="8" fill="#00f0f0"/><rect x="296" y="451" width="2" height="13" fill="#00f0f0"/><rect x="299" y="451" width="2" height="17" fill="#00f0f0"/><rect x="301" y="451" width="2" height="23" fill="#00f0f0"/><rect x="304" y="451" width="2" height="25" fill="#00f0f0"/><rect x="307" y="451" width="2" height="24" fill="#00f0f0"/><rect x="309" y="451" width="2" height="19" fill="#00f0f0"/><rect x="312" y="451" width="2" height="18" fill="#00f0f0"/><rect x="314" y="451" width="2" height="16" fill="#00f0f0"/><rect x="317" y="451" width="2" height="8" fill="#00f0f0"/><rect x="320" y="451" width="2" height="2" fill="#00f0f0"/><rect x="320" y="449" width="2" height="1" fill="#ff4848"/><rect x="323" y="443" width="2" height="7" fill="#ff4848"/><rect x="325" y="442" width="2" height="8" fill="#ff4848"/><rect x="328" y="441" width="2" height="9" fill="#ff4848"/><rect x="330" y="444" width="2" height="6" fill="#ff4848"/><rect x="334" y="451" width="2" height="1" fill="#00f0f0"/><rect x="337" y="451" width="2" height="6" fill="#00f0f0"/><rect x="339" y="451" width="2" height="11" fill="#00f0f0"/><rect x="342" y="451" width="2" height="11" fill="#00f0f0"/><rect x="344" y="451" width="2" height="9" fill="#00f0f0"/><rect x="347" y="451" width="2" height="5" fill="#00f0f0"/><rect x="350" y="449" width="2" height="1" fill="#ff4848"/><rect x="353" y="445" width="2" height="5" fill="#ff4848"/><rect x="355" y="441" width="2" height="9" fill="#ff4848"/><rect x="358" y="440" width="2" height="10" fill="#ff4848"/><rect x="360" y="438" width="2" height="12" fill="#ff4848"/><rect x="363" y="437" width="2" height="13" fill="#ff4848"/><rect x="366" y="438" width="2" height="12" fill="#ff4848"/><rect x="368" y="442" width="2" height="8" fill="#ff4848"/><rect x="371" y="446" width="2" height="4" fill="#ff4848"/><rect x="375" y="449" width="2" height="1" fill="#ff4848"/><rect x="378" y="445" width="2" height="5" fill="#ff4848"/><rect x="380" y="442" width="2" height="8" fill="#ff4848"/><rect x="383" y="440" width="2" height="10" fill="#ff4848"/><rect x="385" y="438" width="2" height="12" fill="#ff4848"/><rect x="388" y="436" width="2" height="14" fill="#ff4848"/><rect x="391" y="435" width="2" height="15" fill="#ff4848"/><rect x="393" y="435" width="2" height="15" fill="#ff4848"/><rect x="396" y="436" width="2" height="14" fill="#ff4848"/><rect x="398" y="439" width="2" height="11" fill="#ff4848"/><rect x="401" y="441" width="2" height="9" fill="#ff4848"/><rect x="404" y="443" width="2" height="7" fill="#ff4848"/><rect x="406" y="447" width="2" height="3" fill="#ff4848"/><rect x="410" y="449" width="2" height="1" fill="#ff4848"/><rect x="413" y="448" width="2" height="2" fill="#ff4848"/><rect x="415" y="445" width="2" height="5" fill="#ff4848"/><rect x="418" y="445" width="2" height="5" fill="#ff4848"/><rect x="420" y="443" width="2" height="7" fill="#ff4848"/><rect x="423" y="442" width="2" height="8" fill="#ff4848"/><rect x="426" y="442" width="2" height="8" fill="#ff4848"/><rect x="428" y="443" width="2" height="7" fill="#ff4848"/><rect x="431" y="441" width="2" height="9" fill="#ff4848"/><rect x="433" y="443" width="2" height="7" fill="#ff4848"/><rect x="436" y="443" width="2" height="7" fill="#ff4848"/><rect x="439" y="445" width="2" height="5" fill="#ff4848"/><rect x="441" y="447" width="2" height="3" fill="#ff4848"/><rect x="444" y="449" width="2" height="1" fill="#ff4848"/><rect x="446" y="451" width="2" height="1" fill="#00f0f0"/><rect x="449" y="451" width="2" height="4" fill="#00f0f0"/><rect x="451" y="451" width="2" height="6" fill="#00f0f0"/><rect x="454" y="451" width="2" height="6" fill="#00f0f0"/><rect x="456" y="451" width="2" height="4" fill="#00f0f0"/><rect x="459" y="451" width="2" height="2" fill="#00f0f0"/><rect x="461" y="449" width="2" height="1" fill="#ff4848"/><rect x="464" y="437" width="2" height="13" fill="#ff4848"/><rect x="466" y="430" width="2" height="20" fill="#ff4848"/><rect x="469" y="422" width="2" height="28" fill="#ff4848"/><rect x="471" y="420" width="2" height="30" fill="#ff4848"/><rect x="474" y="422" width="2" height="28" fill="#ff4848"/><rect x="477" y="431" width="2" height="19" fill="#ff4848"/><rect x="479" y="439" width="2" height="11" fill="#ff4848"/><rect x="482" y="451" width="2" height="1" fill="#00f0f0"/><rect x="485" y="451" width="2" height="4" fill="#00f0f0"/><rect x="487" y="451" width="2" height="5" fill="#00f0f0"/><rect x="490" y="451" width="2" height="9" fill="#00f0f0"/><rect x="492" y="451" width="2" height="11" fill="#00f0f0"/><rect x="495" y="451" width="2" height="12" fill="#00f0f0"/><rect x="498" y="451" width="2" height="13" fill="#00f0f0"/><rect x="500" y="451" width="2" height="14" fill="#00f0f0"/><rect x="503" y="451" width="2" height="15" fill="#00f0f0"/><rect x="505" y="451" width="2" height="14" fill="#00f0f0"/><rect x="508" y="451" width="2" height="17" fill="#00f0f0"/><rect x="511" y="451" width="2" height="14" fill="#00f0f0"/><rect x="513" y="451" width="2" height="14" fill="#00f0f0"/><rect x="516" y="451" width="2" height="13" fill="#00f0f0"/><rect x="518" y="451" width="2" height="12" fill="#00f0f0"/><rect x="521" y="451" width="2" height="12" fill="#00f0f0"/><rect x="524" y="451" width="2" height="8" fill="#00f0f0"/><rect x="526" y="451" width="2" height="7" fill="#00f0f0"/><rect x="529" y="451" width="2" height="5" fill="#00f0f0"/><rect x="531" y="451" width="2" height="2" fill="#00f0f0"/><rect x="533" y="451" width="2" height="1" fill="#00f0f0"/><rect x="536" y="451" width="2" height="6" fill="#00f0f0"/><rect x="538" y="451" width="2" height="10" fill="#00f0f0"/><rect x="541" y="451" width="2" height="13" fill="#00f0f0"/><rect x="543" y="451" width="2" height="17" fill="#00f0f0"/><rect x="546" y="451" width="2" height="16" fill="#00f0f0"/><rect x="549" y="451" width="2" height="19" fill="#00f0f0"/><rect x="551" y="451" width="2" height="19" fill="#00f0f0"/><rect x="554" y="451" width="2" height="15" fill="#00f0f0"/><rect x="556" y="451" width="2" height="13" fill="#00f0f0"/><rect x="559" y="451" width="2" height="11" fill="#00f0f0"/><rect x="562" y="451" width="2" height="7" fill="#00f0f0"/><rect x="564" y="451" width="2" height="2" fill="#00f0f0"/><rect x="566" y="449" width="2" height="1" fill="#ff4848"/><rect x="569" y="440" width="2" height="10" fill="#ff4848"/><rect x="571" y="434" width="2" height="16" fill="#ff4848"/><rect x="574" y="426" width="2" height="24" fill="#ff4848"/><rect x="576" y="421" width="2" height="29" fill="#ff4848"/><rect x="579" y="424" width="2" height="26" fill="#ff4848"/><rect x="582" y="421" width="2" height="29" fill="#ff4848"/><rect x="584" y="422" width="2" height="28" fill="#ff4848"/><rect x="587" y="429" width="2" height="21" fill="#ff4848"/><rect x="589" y="432" width="2" height="18" fill="#ff4848"/><rect x="592" y="441" width="2" height="9" fill="#ff4848"/><rect x="599" y="451" width="2" height="1" fill="#00f0f0"/><rect x="602" y="451" width="2" height="7" fill="#00f0f0"/><rect x="604" y="451" width="2" height="14" fill="#00f0f0"/><rect x="607" y="451" width="2" height="16" fill="#00f0f0"/><rect x="609" y="451" width="2" height="18" fill="#00f0f0"/><rect x="612" y="451" width="2" height="22" fill="#00f0f0"/><rect x="615" y="451" width="2" height="21" fill="#00f0f0"/><rect x="617" y="451" width="2" height="17" fill="#00f0f0"/><rect x="620" y="451" width="2" height="13" fill="#00f0f0"/><rect x="622" y="451" width="2" height="9" fill="#00f0f0"/><rect x="625" y="451" width="2" height="3" fill="#00f0f0"/><rect x="626" y="451" width="2" height="1" fill="#00f0f0"/><rect x="629" y="451" width="2" height="7" fill="#00f0f0"/><rect x="631" y="451" width="2" height="13" fill="#00f0f0"/><rect x="634" y="451" width="2" height="16" fill="#00f0f0"/><rect x="636" y="451" width="2" height="18" fill="#00f0f0"/><rect x="639" y="451" width="2" height="16" fill="#00f0f0"/><rect x="642" y="451" width="2" height="18" fill="#00f0f0"/><rect x="644" y="451" width="2" height="17" fill="#00f0f0"/><rect x="647" y="451" width="2" height="14" fill="#00f0f0"/><rect x="649" y="451" width="2" height="8" fill="#00f0f0"/><rect x="652" y="451" width="2" height="3" fill="#00f0f0"/><rect x="654" y="449" width="2" height="1" fill="#ff4848"/><rect x="657" y="448" width="2" height="2" fill="#ff4848"/><rect x="659" y="446" width="2" height="4" fill="#ff4848"/><rect x="662" y="445" width="2" height="5" fill="#ff4848"/><rect x="664" y="444" width="2" height="6" fill="#ff4848"/><rect x="667" y="444" width="2" height="6" fill="#ff4848"/><rect x="670" y="445" width="2" height="5" fill="#ff4848"/><rect x="672" y="445" width="2" height="5" fill="#ff4848"/><rect x="675" y="445" width="2" height="5" fill="#ff4848"/><rect x="677" y="447" width="2" height="3" fill="#ff4848"/><rect x="682" y="449" width="2" height="1" fill="#ff4848"/><rect x="685" y="449" width="2" height="1" fill="#ff4848"/><rect x="687" y="448" width="2" height="2" fill="#ff4848"/><rect x="690" y="447" width="2" height="3" fill="#ff4848"/><rect x="692" y="447" width="2" height="3" fill="#ff4848"/><rect x="695" y="448" width="2" height="2" fill="#ff4848"/><rect x="698" y="449" width="2" height="1" fill="#ff4848"/><rect x="701" y="449" width="2" height="1" fill="#ff4848"/><rect x="704" y="444" width="2" height="6" fill="#ff4848"/><rect x="706" y="441" width="2" height="9" fill="#ff4848"/><rect x="709" y="438" width="2" height="12" fill="#ff4848"/><rect x="711" y="435" width="2" height="15" fill="#ff4848"/><rect x="714" y="436" width="2" height="14" fill="#ff4848"/><rect x="717" y="438" width="2" height="12" fill="#ff4848"/><rect x="719" y="440" width="2" height="10" fill="#ff4848"/><rect x="722" y="444" width="2" height="6" fill="#ff4848"/><rect x="724" y="448" width="2" height="2" fill="#ff4848"/><rect x="726" y="451" width="2" height="1" fill="#00f0f0"/><rect x="729" y="451" width="2" height="15" fill="#00f0f0"/><rect x="731" y="451" width="2" height="20" fill="#00f0f0"/><rect x="734" y="451" width="2" height="13" fill="#00f0f0"/><polyline points="63.9,460.7 71.7,463.6 77.6,467.5 85.4,474.3 91.2,471.4 97.1,468.5 104.9,466.5 110.8,461.6 116.6,462.6 124.5,458.7 132.3,450.9 138.1,447.0 147.9,443.0 159.6,434.3 169.4,430.4 177.2,429.4 187.0,433.3 194.8,439.2 200.6,449.9 206.5,453.8 212.3,454.8 220.2,449.9 226.0,449.9 235.8,454.8 247.5,457.7 261.7,460.7 273.4,455.8 289.0,450.9 296.9,459.7 306.6,473.4 316.4,479.2 328.0,468.5 336.0,472.4 345.7,479.2 357.4,475.3 369.0,463.6 382.8,453.8 394.5,446.0 406.2,443.0 421.9,439.2 437.5,434.3 451.7,435.3 459.5,439.2 465.4,426.5 473.2,413.8 479.0,414.8 490.8,422.6 502.5,436.2 510.3,439.2 524.0,443.0 535.7,450.0 545.5,457.7 561.0,459.3 569.0,448.0 580.6,432.3 588.4,426.5 596.2,429.4 600.0,430.4 607.8,436.2 613.7,446.0 619.5,444.0 629.3,451.9 639.0,465.5 645.0,469.5 658.6,466.5 678.0,458.7 697.7,456.8 709.4,449.0 719.0,441.1 727.0,445.0 734.8,450.0" fill="none" stroke="#f0f0f0" stroke-width="1.2"/><polyline points="63.9,460.7 79.5,465.5 89.3,471.4 99.0,468.5 110.8,464.6 124.5,462.6 138.1,449.9 149.8,446.0 161.6,438.2 177.2,431.4 192.8,434.3 208.4,449.9 216.2,452.9 228.0,450.9 245.5,455.8 265.6,460.7 279.3,454.8 291.0,450.9 304.7,467.5 318.4,475.3 332.0,470.4 347.7,478.2 367.2,467.5 386.7,455.8 402.3,446.0 421.9,442.1 437.5,436.2 459.5,436.2 471.2,424.5 481.0,417.7 494.7,424.5 508.4,435.3 526.0,441.1 537.7,448.9 549.4,456.8 563.0,458.7 576.7,448.0 588.4,431.4 600.0,430.4 617.6,442.1 625.4,445.0 635.2,455.8 646.9,465.5 664.5,464.6 682.0,459.7 697.7,457.7 711.3,449.9 721.0,443.1 729.0,445.0 734.8,450.0" fill="none" stroke="#e8e800" stroke-width="1.2"/><rect x="64" y="553" width="2" height="3" fill="#a00000"/><rect x="66" y="553" width="2" height="4" fill="#a00000"/><rect x="69" y="554" width="2" height="4" fill="#a00000"/><rect x="71" y="554" width="2" height="4" fill="#a00000"/><rect x="74" y="555" width="2" height="4" fill="#a00000"/><rect x="76" y="556" width="2" height="4" fill="#a00000"/><rect x="79" y="556" width="2" height="4" fill="#a00000"/><rect x="81" y="557" width="2" height="3" fill="#a00000"/><rect x="84" y="558" width="2" height="3" fill="#a00000"/><rect x="86" y="558" width="2" height="3" fill="#a00000"/><rect x="89" y="559" width="2" height="3" fill="#a00000"/><rect x="91" y="559" width="2" height="3" fill="#a00000"/><rect x="93" y="560" width="2" height="3" fill="#a00000"/><rect x="96" y="560" width="2" height="3" fill="#a00000"/><rect x="98" y="561" width="2" height="3" fill="#a00000"/><rect x="101" y="561" width="2" height="3" fill="#a00000"/><rect x="103" y="561" width="2" height="3" fill="#a00000"/><rect x="106" y="561" width="2" height="3" fill="#0018ff"/><rect x="108" y="561" width="2" height="3" fill="#0018ff"/><rect x="111" y="561" width="2" height="3" fill="#0018ff"/><rect x="113" y="561" width="2" height="3" fill="#0018ff"/><rect x="115" y="561" width="2" height="3" fill="#0018ff"/><rect x="118" y="561" width="2" height="3" fill="#0018ff"/><rect x="120" y="561" width="2" height="3" fill="#0018ff"/><rect x="123" y="560" width="2" height="4" fill="#0018ff"/><rect x="125" y="558" width="2" height="6" fill="#0018ff"/><rect x="128" y="556" width="2" height="6" fill="#0018ff"/><rect x="130" y="555" width="2" height="6" fill="#0018ff"/><rect x="133" y="553" width="2" height="6" fill="#0018ff"/><rect x="135" y="552" width="2" height="6" fill="#0018ff"/><rect x="138" y="550" width="2" height="6" fill="#0018ff"/><rect x="140" y="548" width="2" height="8" fill="#0018ff"/><rect x="142" y="545" width="2" height="8" fill="#0018ff"/><rect x="145" y="542" width="2" height="8" fill="#0018ff"/><rect x="147" y="540" width="2" height="8" fill="#0018ff"/><rect x="150" y="537" width="2" height="8" fill="#0018ff"/><rect x="152" y="535" width="2" height="8" fill="#0018ff"/><rect x="155" y="532" width="2" height="8" fill="#0018ff"/><rect x="157" y="530" width="2" height="8" fill="#0018ff"/><rect x="160" y="528" width="2" height="8" fill="#0018ff"/><rect x="162" y="525" width="2" height="8" fill="#0018ff"/><rect x="164" y="523" width="2" height="8" fill="#0018ff"/><rect x="167" y="520" width="2" height="8" fill="#0018ff"/><rect x="169" y="518" width="2" height="8" fill="#0018ff"/><rect x="172" y="516" width="2" height="8" fill="#0018ff"/><rect x="174" y="515" width="2" height="6" fill="#0018ff"/><rect x="177" y="513" width="2" height="6" fill="#0018ff"/><rect x="179" y="512" width="2" height="6" fill="#0018ff"/><rect x="182" y="510" width="2" height="6" fill="#0018ff"/><rect x="184" y="509" width="2" height="6" fill="#0018ff"/><rect x="186" y="507" width="2" height="6" fill="#0018ff"/><rect x="189" y="507" width="2" height="4" fill="#0018ff"/><rect x="191" y="506" width="2" height="3" fill="#0018ff"/><rect x="194" y="506" width="2" height="3" fill="#0018ff"/><rect x="196" y="505" width="2" height="3" fill="#0018ff"/><rect x="199" y="505" width="2" height="3" fill="#a00000"/><rect x="201" y="506" width="2" height="3" fill="#a00000"/><rect x="204" y="506" width="2" height="3" fill="#a00000"/><rect x="206" y="506" width="2" height="3" fill="#a00000"/><rect x="209" y="507" width="2" height="3" fill="#a00000"/><rect x="211" y="507" width="2" height="3" fill="#a00000"/><rect x="213" y="507" width="2" height="3" fill="#a00000"/><rect x="216" y="508" width="2" height="3" fill="#a00000"/><rect x="218" y="508" width="2" height="3" fill="#a00000"/><rect x="221" y="509" width="2" height="3" fill="#a00000"/><rect x="223" y="509" width="2" height="3" fill="#a00000"/><rect x="226" y="509" width="2" height="4" fill="#a00000"/><rect x="228" y="509" width="2" height="6" fill="#a00000"/><rect x="231" y="511" width="2" height="6" fill="#a00000"/><rect x="233" y="513" width="2" height="6" fill="#a00000"/><rect x="235" y="514" width="2" height="6" fill="#a00000"/><rect x="238" y="516" width="2" height="6" fill="#a00000"/><rect x="240" y="517" width="2" height="6" fill="#a00000"/><rect x="243" y="518" width="2" height="7" fill="#a00000"/><rect x="245" y="520" width="2" height="8" fill="#a00000"/><rect x="248" y="522" width="2" height="8" fill="#a00000"/><rect x="250" y="524" width="2" height="8" fill="#a00000"/><rect x="253" y="527" width="2" height="8" fill="#a00000"/><rect x="255" y="529" width="2" height="8" fill="#a00000"/><rect x="258" y="531" width="2" height="7" fill="#a00000"/><rect x="260" y="534" width="2" height="4" fill="#a00000"/><rect x="262" y="535" width="2" height="4" fill="#a00000"/><rect x="265" y="536" width="2" height="4" fill="#a00000"/><rect x="267" y="537" width="2" height="4" fill="#a00000"/><rect x="270" y="538" width="2" height="4" fill="#a00000"/><rect x="272" y="539" width="2" height="4" fill="#a00000"/><rect x="275" y="540" width="2" height="4" fill="#a00000"/><rect x="277" y="541" width="2" height="4" fill="#a00000"/><rect x="280" y="542" width="2" height="3" fill="#a00000"/><rect x="282" y="543" width="2" height="3" fill="#a00000"/><rect x="284" y="543" width="2" height="3" fill="#a00000"/><rect x="287" y="544" width="2" height="3" fill="#a00000"/><rect x="289" y="544" width="2" height="3" fill="#a00000"/><rect x="292" y="545" width="2" height="3" fill="#a00000"/><rect x="294" y="545" width="2" height="3" fill="#a00000"/><rect x="297" y="545" width="2" height="4" fill="#a00000"/><rect x="299" y="546" width="2" height="4" fill="#a00000"/><rect x="302" y="547" width="2" height="4" fill="#a00000"/><rect x="304" y="548" width="2" height="4" fill="#a00000"/><rect x="307" y="549" width="2" height="4" fill="#a00000"/><rect x="309" y="550" width="2" height="4" fill="#a00000"/><rect x="311" y="551" width="2" height="4" fill="#a00000"/><rect x="314" y="552" width="2" height="4" fill="#a00000"/><rect x="316" y="553" width="2" height="4" fill="#a00000"/><rect x="319" y="554" width="2" height="4" fill="#a00000"/><rect x="321" y="555" width="2" height="3" fill="#a00000"/><rect x="324" y="555" width="2" height="3" fill="#a00000"/><rect x="326" y="555" width="2" height="3" fill="#a00000"/><rect x="329" y="556" width="2" height="3" fill="#a00000"/><rect x="331" y="556" width="2" height="3" fill="#a00000"/><rect x="333" y="556" width="2" height="3" fill="#a00000"/><rect x="336" y="557" width="2" height="3" fill="#a00000"/><rect x="338" y="557" width="2" height="3" fill="#a00000"/><rect x="341" y="557" width="2" height="3" fill="#a00000"/><rect x="343" y="558" width="2" height="3" fill="#a00000"/><rect x="346" y="558" width="2" height="3" fill="#a00000"/><rect x="348" y="558" width="2" height="3" fill="#a00000"/><rect x="351" y="559" width="2" height="3" fill="#a00000"/><rect x="353" y="559" width="2" height="3" fill="#a00000"/><rect x="356" y="559" width="2" height="3" fill="#a00000"/><rect x="358" y="560" width="2" height="3" fill="#a00000"/><rect x="360" y="560" width="2" height="3" fill="#a00000"/><rect x="363" y="561" width="2" height="3" fill="#a00000"/><rect x="365" y="561" width="2" height="3" fill="#a00000"/><rect x="368" y="561" width="2" height="3" fill="#a00000"/><rect x="370" y="562" width="2" height="3" fill="#a00000"/><rect x="373" y="562" width="2" height="3" fill="#a00000"/><rect x="375" y="562" width="2" height="3" fill="#a00000"/><rect x="378" y="563" width="2" height="3" fill="#0018ff"/><rect x="380" y="561" width="2" height="4" fill="#0018ff"/><rect x="382" y="560" width="2" height="4" fill="#0018ff"/><rect x="385" y="559" width="2" height="4" fill="#0018ff"/><rect x="387" y="558" width="2" height="4" fill="#0018ff"/><rect x="390" y="557" width="2" height="4" fill="#0018ff"/><rect x="392" y="556" width="2" height="4" fill="#0018ff"/><rect x="395" y="555" width="2" height="4" fill="#0018ff"/><rect x="397" y="554" width="2" height="5" fill="#0018ff"/><rect x="400" y="551" width="2" height="7" fill="#0018ff"/><rect x="402" y="549" width="2" height="7" fill="#0018ff"/><rect x="405" y="547" width="2" height="7" fill="#0018ff"/><rect x="407" y="546" width="2" height="7" fill="#0018ff"/><rect x="409" y="544" width="2" height="7" fill="#0018ff"/><rect x="412" y="542" width="2" height="7" fill="#0018ff"/><rect x="414" y="540" width="2" height="7" fill="#0018ff"/><rect x="417" y="537" width="2" height="8" fill="#0018ff"/><rect x="419" y="534" width="2" height="8" fill="#0018ff"/><rect x="422" y="532" width="2" height="8" fill="#0018ff"/><rect x="424" y="530" width="2" height="8" fill="#0018ff"/><rect x="427" y="527" width="2" height="8" fill="#0018ff"/><rect x="429" y="525" width="2" height="8" fill="#0018ff"/><rect x="431" y="523" width="2" height="8" fill="#0018ff"/><rect x="434" y="521" width="2" height="8" fill="#0018ff"/><rect x="436" y="519" width="2" height="8" fill="#0018ff"/><rect x="439" y="516" width="2" height="8" fill="#0018ff"/><rect x="441" y="514" width="2" height="8" fill="#0018ff"/><rect x="444" y="512" width="2" height="8" fill="#0018ff"/><rect x="446" y="511" width="2" height="5" fill="#0018ff"/><rect x="449" y="511" width="2" height="4" fill="#0018ff"/><rect x="451" y="510" width="2" height="4" fill="#0018ff"/><rect x="454" y="509" width="2" height="4" fill="#0018ff"/><rect x="456" y="508" width="2" height="4" fill="#0018ff"/><rect x="458" y="507" width="2" height="4" fill="#0018ff"/><rect x="461" y="506" width="2" height="4" fill="#0018ff"/><rect x="463" y="505" width="2" height="4" fill="#0018ff"/><rect x="466" y="504" width="2" height="4" fill="#0018ff"/><rect x="468" y="503" width="2" height="4" fill="#0018ff"/><rect x="471" y="503" width="2" height="3" fill="#0018ff"/><rect x="473" y="502" width="2" height="3" fill="#0018ff"/><rect x="476" y="502" width="2" height="3" fill="#0018ff"/><rect x="478" y="502" width="2" height="3" fill="#0018ff"/><rect x="480" y="501" width="2" height="3" fill="#0018ff"/><rect x="483" y="501" width="2" height="3" fill="#0018ff"/><rect x="485" y="500" width="2" height="3" fill="#0018ff"/><rect x="488" y="500" width="2" height="3" fill="#0018ff"/><rect x="490" y="499" width="2" height="3" fill="#0018ff"/><rect x="493" y="499" width="2" height="3" fill="#0018ff"/><rect x="495" y="499" width="2" height="3" fill="#0018ff"/><rect x="498" y="499" width="2" height="3" fill="#0018ff"/><rect x="500" y="499" width="2" height="3" fill="#0018ff"/><rect x="503" y="499" width="2" height="3" fill="#0018ff"/><rect x="505" y="499" width="2" height="3" fill="#0018ff"/><rect x="507" y="499" width="2" height="3" fill="#0018ff"/><rect x="510" y="499" width="2" height="3" fill="#0018ff"/><rect x="512" y="499" width="2" height="3" fill="#0018ff"/><rect x="515" y="499" width="2" height="3" fill="#a00000"/><rect x="517" y="499" width="2" height="3" fill="#a00000"/><rect x="520" y="499" width="2" height="3" fill="#a00000"/><rect x="522" y="499" width="2" height="3" fill="#a00000"/><rect x="525" y="499" width="2" height="3" fill="#a00000"/><rect x="527" y="499" width="2" height="3" fill="#a00000"/><rect x="529" y="499" width="2" height="3" fill="#a00000"/><rect x="532" y="499" width="2" height="4" fill="#a00000"/><rect x="534" y="500" width="2" height="5" fill="#a00000"/><rect x="537" y="501" width="2" height="5" fill="#a00000"/><rect x="539" y="502" width="2" height="5" fill="#a00000"/><rect x="542" y="503" width="2" height="5" fill="#a00000"/><rect x="544" y="504" width="2" height="5" fill="#a00000"/><rect x="547" y="505" width="2" height="5" fill="#a00000"/><rect x="549" y="506" width="2" height="6" fill="#a00000"/><rect x="552" y="507" width="2" height="6" fill="#a00000"/><rect x="554" y="509" width="2" height="6" fill="#a00000"/><rect x="556" y="511" width="2" height="6" fill="#a00000"/><rect x="559" y="513" width="2" height="6" fill="#a00000"/><rect x="561" y="514" width="2" height="6" fill="#a00000"/><rect x="564" y="518" width="2" height="3" fill="#a00000"/><rect x="566" y="516" width="2" height="4" fill="#0018ff"/><rect x="569" y="516" width="2" height="4" fill="#0018ff"/><rect x="571" y="515" width="2" height="4" fill="#0018ff"/><rect x="574" y="514" width="2" height="4" fill="#0018ff"/><rect x="576" y="513" width="2" height="4" fill="#0018ff"/><rect x="578" y="512" width="2" height="4" fill="#0018ff"/><rect x="581" y="512" width="2" height="4" fill="#0018ff"/><rect x="583" y="511" width="2" height="4" fill="#0018ff"/><rect x="586" y="510" width="2" height="4" fill="#0018ff"/><rect x="588" y="509" width="2" height="4" fill="#0018ff"/><rect x="591" y="508" width="2" height="4" fill="#0018ff"/><rect x="593" y="508" width="2" height="4" fill="#0018ff"/><rect x="596" y="507" width="2" height="4" fill="#0018ff"/><rect x="598" y="506" width="2" height="4" fill="#0018ff"/><rect x="601" y="505" width="2" height="4" fill="#0018ff"/><rect x="603" y="505" width="2" height="3" fill="#a00000"/><rect x="605" y="505" width="2" height="3" fill="#a00000"/><rect x="608" y="505" width="2" height="3" fill="#a00000"/><rect x="610" y="506" width="2" height="3" fill="#a00000"/><rect x="613" y="506" width="2" height="3" fill="#a00000"/><rect x="615" y="506" width="2" height="3" fill="#a00000"/><rect x="618" y="506" width="2" height="3" fill="#a00000"/><rect x="620" y="506" width="2" height="3" fill="#a00000"/><rect x="623" y="506" width="2" height="5" fill="#a00000"/><rect x="625" y="507" width="2" height="5" fill="#a00000"/><rect x="628" y="509" width="2" height="5" fill="#a00000"/><rect x="630" y="510" width="2" height="5" fill="#a00000"/><rect x="632" y="511" width="2" height="5" fill="#a00000"/><rect x="635" y="513" width="2" height="6" fill="#a00000"/><rect x="637" y="513" width="2" height="8" fill="#a00000"/><rect x="640" y="516" width="2" height="8" fill="#a00000"/><rect x="642" y="518" width="2" height="8" fill="#a00000"/><rect x="645" y="520" width="2" height="8" fill="#a00000"/><rect x="647" y="523" width="2" height="8" fill="#a00000"/><rect x="650" y="525" width="2" height="8" fill="#a00000"/><rect x="652" y="528" width="2" height="7" fill="#a00000"/><rect x="654" y="530" width="2" height="7" fill="#a00000"/><rect x="657" y="532" width="2" height="7" fill="#a00000"/><rect x="659" y="534" width="2" height="7" fill="#a00000"/><rect x="662" y="536" width="2" height="7" fill="#a00000"/><rect x="664" y="538" width="2" height="7" fill="#a00000"/><rect x="667" y="540" width="2" height="6" fill="#a00000"/><rect x="669" y="541" width="2" height="5" fill="#a00000"/><rect x="672" y="543" width="2" height="5" fill="#a00000"/><rect x="674" y="544" width="2" height="5" fill="#a00000"/><rect x="677" y="545" width="2" height="5" fill="#a00000"/><rect x="679" y="546" width="2" height="5" fill="#a00000"/><rect x="681" y="548" width="2" height="5" fill="#a00000"/><rect x="684" y="549" width="2" height="5" fill="#a00000"/><rect x="686" y="551" width="2" height="4" fill="#a00000"/><rect x="689" y="551" width="2" height="3" fill="#a00000"/><rect x="691" y="552" width="2" height="3" fill="#a00000"/><rect x="694" y="553" width="2" height="3" fill="#a00000"/><rect x="696" y="553" width="2" height="3" fill="#a00000"/><rect x="699" y="554" width="2" height="3" fill="#a00000"/><rect x="701" y="555" width="2" height="3" fill="#0018ff"/><rect x="703" y="554" width="2" height="3" fill="#0018ff"/><rect x="706" y="553" width="2" height="3" fill="#0018ff"/><rect x="708" y="553" width="2" height="3" fill="#0018ff"/><rect x="711" y="552" width="2" height="3" fill="#0018ff"/><rect x="713" y="551" width="2" height="3" fill="#0018ff"/><rect x="716" y="550" width="2" height="4" fill="#0018ff"/><rect x="718" y="548" width="2" height="6" fill="#0018ff"/><rect x="721" y="546" width="2" height="6" fill="#0018ff"/><rect x="723" y="544" width="2" height="6" fill="#0018ff"/><rect x="726" y="544" width="2" height="3" fill="#0018ff"/><rect x="728" y="545" width="2" height="3" fill="#a00000"/><rect x="730" y="545" width="2" height="3" fill="#a00000"/><rect x="733" y="546" width="2" height="3" fill="#a00000"/><polyline points="63.5,692.2 64.8,696.0 66.0,703.8 67.3,705.1 68.6,712.6 69.8,709.7 71.1,705.9 72.3,706.7 73.6,701.9 74.9,709.4 76.2,712.3 77.5,715.0 78.7,719.5 80.0,724.5 81.3,722.8 82.5,725.9 83.8,730.9 85.1,725.2 86.3,715.4 87.6,706.7 88.9,709.1 90.2,702.5 91.4,706.4 92.7,702.0 94.0,700.1 95.3,696.9 96.5,695.1 97.8,695.2 99.1,692.3 100.3,695.5 101.6,696.7 102.9,698.9 104.1,703.8 105.4,704.7 106.7,692.4 107.9,681.0 109.2,671.6 110.5,675.6 111.7,680.4 113.0,687.5 114.2,682.3 115.5,676.9 116.8,694.5 118.1,708.5 119.4,697.3 120.6,690.8 121.9,682.1 123.2,677.8 124.5,670.6 125.7,661.6 127.0,659.4 128.3,650.8 129.5,649.2 130.8,647.8 132.1,639.6 133.3,637.0 134.6,629.6 135.9,639.2 137.1,645.7 138.4,650.4 139.6,658.0 140.9,660.5 142.2,659.2 143.5,655.0 144.7,651.4 146.0,647.1 147.3,645.8 148.6,641.4 149.9,633.5 151.1,629.6 152.4,620.9 153.7,620.9 154.9,616.7 156.2,615.0 157.4,610.1 158.7,609.8 159.9,613.3 161.2,617.8 162.5,616.8 163.8,617.7 165.1,614.1 166.3,612.1 167.6,609.9 168.9,612.4 170.2,606.3 171.4,604.7 172.7,603.3 173.9,603.9 175.2,596.9 176.5,603.1 177.7,607.7 179.0,613.8 180.3,617.4 181.5,621.7 182.8,622.2 184.1,619.2 185.3,615.1 186.6,614.4 187.9,620.9 189.1,622.1 190.4,628.2 191.7,634.6 193.0,638.0 194.2,642.8 195.5,646.8 196.8,657.0 198.1,667.5 199.3,682.0 200.6,693.8 201.9,689.9 203.1,687.2 204.4,680.5 205.7,674.4 207.0,678.5 208.2,682.3 209.5,682.0 210.8,690.6 212.1,682.5 213.3,675.7 214.6,667.9 215.8,658.1 217.1,650.8 218.4,646.0 219.7,646.1 220.9,639.7 222.2,636.6 223.5,634.5 224.8,642.6 226.0,652.2 227.3,658.9 228.6,667.1 229.8,676.4 231.1,684.6 232.4,684.9 233.6,681.6 234.9,685.4 236.2,682.6 237.4,678.5 238.7,677.8 240.0,680.9 241.2,683.6 242.5,684.7 243.8,691.6 245.0,695.0 246.3,694.4 247.6,691.7 248.8,686.6 250.1,683.9 251.3,682.5 252.6,679.3 253.9,689.7 255.3,692.7 256.6,698.9 257.9,697.3 259.2,687.5 260.6,677.9 261.9,673.1 263.2,678.8 264.5,690.6 265.8,702.1 267.1,691.2 268.5,679.9 269.8,667.1 271.1,657.5 272.4,660.6 273.8,668.5 275.1,671.4 276.4,677.2 277.7,662.6 279.0,650.1 280.3,641.8 281.6,653.3 283.0,663.1 284.3,673.3 285.6,667.7 286.9,661.5 288.2,652.8 289.5,663.5 290.8,671.5 292.2,678.5 293.5,687.4 294.8,697.9 296.1,697.1 297.5,699.0 298.8,699.9 300.1,696.2 301.4,707.9 302.7,717.0 304.0,725.6 305.3,717.9 306.6,712.8 308.0,708.6 309.3,704.2 310.6,700.0 311.9,705.8 313.2,710.8 314.6,713.7 315.9,714.9 317.2,706.0 318.5,697.0 319.9,682.9 321.2,676.5 322.5,680.1 323.8,681.4 325.2,683.3 326.5,683.8 327.8,684.1 329.1,693.6 330.4,696.7 331.7,705.3 333.1,712.2 334.4,714.6 335.7,720.5 337.0,729.6 338.3,724.3 339.7,717.0 341.0,712.8 342.3,715.5 343.6,722.7 344.9,724.7 346.2,716.8 347.5,717.0 348.9,713.9 350.2,708.0 351.5,703.6 352.8,702.1 354.1,697.0 355.5,693.7 356.8,696.8 358.1,692.2 359.4,688.6 360.7,688.1 362.1,682.2 363.4,681.9 364.7,678.8 366.0,678.1 367.3,681.4 368.6,684.8 369.9,694.1 371.3,705.9 372.6,713.6 373.9,692.1 375.2,668.0 376.5,670.0 377.8,664.0 379.2,662.0 380.5,660.1 381.8,659.4 383.1,640.7 384.4,646.0 385.8,645.8 387.1,648.3 388.4,650.5 389.7,644.5 391.0,644.1 392.4,639.6 393.7,635.5 395.0,638.1 396.3,632.2 397.6,631.8 399.0,631.1 400.3,627.9 401.6,624.4 402.9,630.3 404.3,635.4 405.6,641.6 406.9,641.2 408.2,647.5 409.5,649.3 410.8,653.1 412.1,648.1 413.5,638.6 414.8,631.0 416.1,624.3 417.4,624.1 418.7,620.2 420.1,620.1 421.4,618.3 422.7,617.3 424.0,617.3 425.3,618.1 426.6,620.9 428.0,622.9 429.3,628.0 430.6,623.7 431.9,621.9 433.3,619.4 434.6,612.4 435.9,611.3 437.2,619.7 438.5,625.2 439.8,627.1 441.1,630.3 442.5,635.6 443.8,636.6 445.1,640.9 446.4,635.2 447.7,634.0 449.1,630.0 450.4,625.9 451.7,616.7 453.0,627.2 454.3,634.0 455.7,638.0 457.0,649.6 458.3,657.2 459.6,634.9 460.9,621.5 462.2,612.7 463.5,607.7 464.9,605.2 466.2,598.8 467.5,589.3 468.8,585.4 470.1,591.2 471.5,595.4 472.8,599.8 474.1,605.8 475.4,610.9 476.8,609.3 478.1,615.2 479.4,617.1 480.7,614.2 482.0,615.6 483.4,616.9 484.7,615.8 486.0,612.6 487.3,617.7 488.6,619.5 490.0,623.6 491.3,621.4 492.6,625.3 493.9,626.8 495.2,634.0 496.5,633.8 497.9,635.8 499.2,640.4 500.5,646.1 501.8,648.4 503.1,642.6 504.4,639.5 505.7,641.6 507.1,637.1 508.4,635.4 509.7,629.3 511.0,626.6 512.5,631.2 514.0,630.3 515.5,628.9 516.9,638.0 518.2,640.1 519.6,645.0 521.0,644.5 522.3,653.1 523.7,652.2 525.0,642.6 526.4,625.8 527.8,645.6 529.1,667.4 530.5,667.4 531.8,661.1 533.2,658.0 534.6,689.8 536.0,717.4 537.4,700.3 538.7,684.2 540.1,667.1 541.5,670.1 542.8,672.8 544.2,674.8 545.6,679.6 546.9,678.8 548.3,682.1 549.7,677.4 551.0,675.7 552.4,671.0 553.8,675.1 555.1,676.5 556.5,683.5 557.8,685.2 559.2,685.7 560.6,676.5 561.9,668.3 563.3,652.4 564.7,645.8 566.0,632.5 567.4,622.0 568.8,631.3 570.1,635.9 571.5,643.8 572.9,641.2 574.2,639.2 575.6,631.6 577.0,630.8 578.8,617.0 580.5,603.6 582.1,607.7 583.6,612.8 585.2,616.5 586.6,621.8 588.0,626.2 589.3,635.0 590.7,636.9 592.1,632.3 593.4,627.7 594.8,628.1 596.0,630.0 597.2,630.5 598.4,629.8 599.6,631.2 600.9,633.2 602.1,635.9 603.3,635.7 604.5,639.1 605.7,639.7 607.1,654.1 608.5,664.4 609.8,672.1 611.2,680.6 612.6,673.3 613.9,657.7 615.2,646.4 616.6,632.6 617.8,639.8 619.0,645.2 620.3,650.2 621.5,653.3 622.7,660.0 623.9,661.8 625.2,668.3 626.4,672.1 627.6,678.8 629.0,680.1 630.3,683.3 631.6,688.4 633.0,691.4 634.4,695.3 635.8,696.8 637.1,700.0 638.5,701.3 639.9,703.5 641.3,706.3 642.7,700.2 644.0,696.6 645.4,697.4 646.8,689.2 648.1,689.4 649.5,685.8 650.9,682.6 652.2,687.8 653.6,688.6 655.0,687.5 656.3,688.6 657.7,689.5 658.9,684.1 660.1,685.0 661.3,683.5 662.5,684.1 663.8,682.6 665.0,681.4 666.2,678.5 667.4,679.0 668.6,676.4 670.0,680.2 671.4,681.2 672.7,683.7 674.1,688.1 675.5,678.5 676.8,666.0 678.2,678.6 679.5,685.2 680.9,693.8 682.3,702.1 683.6,696.9 685.0,690.3 686.4,681.9 687.7,681.2 689.1,683.3 690.5,684.3 691.8,687.0 693.2,690.2 694.6,689.1 696.0,682.5 697.3,668.9 698.7,657.2 700.0,647.7 701.4,639.8 702.8,639.1 704.2,644.8 705.5,648.6 706.9,648.2 708.3,650.0 709.7,638.3 711.0,627.2 712.4,615.4 713.8,615.9 715.1,617.4 716.5,615.4 717.9,617.2 719.2,619.2 720.6,623.5 722.0,631.1 723.3,642.9 724.6,649.8 726.0,660.4 727.4,675.3 728.8,691.3 730.2,696.9 731.5,702.3 732.9,705.4 734.2,704.1 735.6,701.3" fill="none" stroke="#ff50c8" stroke-width="1.6"/><rect x="2.5" y="568.5" width="60" height="166" fill="none" stroke="#d8d8d8" stroke-dasharray="2 1"/></svg>
<!-- chart title -->
<div class="ttl" style="left:4px;top:51px;color:#fff;line-height:14px"><span class="cj">欧元美元</span>(EURUSD)&lt;15<span class="cj">分</span>&gt;</div>
<svg class="a" style="left:754px;top:49px" width="34" height="16"><g fill="none" stroke="#60a8ff" stroke-width="1"><rect x="0.5" y="0.5" width="15" height="14"/><rect x="17.5" y="0.5" width="15" height="14"/><path d="M3 7.5 L7 3.5 V5.5 H12.5 V9.5 H7 V11.5 Z"/><path d="M30 7.5 L26 3.5 V5.5 H20.5 V9.5 H26 V11.5 Z"/></g></svg>
<div class="ttl" style="left:65px;top:72px"><span style="color:#b8b8b8">K BOLL(30,2) </span><span style="color:#fff">MID:1.3922 </span><span style="color:#ffff00">UPPER:1.3974 </span><span style="color:#ff00ff">LOWER:1.3871</span></div>
<div class="lab" style="left:24px;top:145px">1.400</div>
<div class="lab" style="left:24px;top:219px">1.390</div>
<div class="lab" style="left:24px;top:292px">1.380</div>
<div class="lab" style="left:24px;top:366px">1.370</div>
<div class="lab" style="left:524px;top:110px;color:#e8e8e8">1.4046</div>
<div class="lab" style="left:316px;top:365px;color:#e8e8e8">1.3698</div>
<div class="ttl" style="left:64px;top:401px"><span style="color:#b8b8b8">MACD(26,12,9) </span><span style="color:#fff">DIFF:-1.0355 </span><span style="color:#ffff00">DEA:-0.2292 </span><span style="color:#b8b8b8">MACD:-2.4189</span></div>
<div class="lab" style="left:50px;top:444px">0</div>
<div class="ttl" style="left:64px;top:486px"><span style="color:#b8b8b8">B<span class="cj">指标</span> </span><span style="color:#fff"><span class="cj">股</span>:30.2459 </span><span style="color:#ffff00"><span class="cj">差</span>:-0.7803 </span><span style="color:#ff00ff">30.0000 </span><span style="color:#00ff00">50.0000 </span><span style="color:#2040ff">70.0000</span></div>
<div class="lab" style="left:44px;top:525px">50</div>
<div class="ttl" style="left:64px;top:571px"><span style="color:#b8b8b8">RSI(14,14,14) </span><span style="color:#fff">RSI1:32.9270 </span><span style="color:#ffff00">RSI2:32.9270 </span><span style="color:#ff40ff">RSI3:32.9270</span></div>
<div class="lab" style="left:44px;top:585px">89</div>
<div class="lab" style="left:44px;top:620px">65</div>
<div class="lab" style="left:44px;top:677px">40</div>
<div class="lab" style="left:44px;top:703px">30</div>
<!-- time axis -->
<div class="a" style="left:34px;top:736px;font-size:12px;line-height:14px;color:#fff">15分</div>
<div class="a" style="left:65px;top:736px;font-size:12px;line-height:14px;color:#fff">1018</div>
<div class="a" style="left:160px;top:736px;font-size:12px;line-height:14px;color:#fff">19</div>
<div class="a" style="left:314px;top:736px;font-size:12px;line-height:14px;color:#fff">20</div>
<div class="a" style="left:468px;top:736px;font-size:12px;line-height:14px;color:#fff">21</div>
<div class="a" style="left:620px;top:736px;font-size:12px;line-height:14px;color:#fff">22</div>
<div class="a mono" style="left:555px;top:735px;width:68px;height:15px;background:#1060f0;border:1px solid #c0d8ff;font-size:11px;line-height:13px;color:#fff;padding-left:2px;letter-spacing:-0.6px">10-21 12:15</div>
<!-- annotation -->
<div class="a" style="left:564px;top:294px;width:129px;height:94px;background:#fff;color:#f00000;font-weight:bold;font-size:16px;line-height:16px;padding-left:1px;white-space:normal;letter-spacing:0.6px">感觉结构还没有<br>走完，但后面没<br>有走出新高，就<br>做了一单空。</div>
<!-- price tag -->
<div class="a mono" style="left:749px;top:302px;width:39px;height:14px;background:#1060f0;border:1px solid #a8c8ff;color:#fff;font-size:11px;line-height:12px;letter-spacing:-0.6px;padding-left:2px">1.3774</div>
<div class="a" style="left:789px;top:49px;width:233px;height:701px;background:#000"></div>
<div class="a" style="left:826px;top:50px;font-family:'Liberation Serif',serif;font-size:18px;line-height:20px;color:#e8e800">欧元美元(EURUSD)</div>
<svg class="a" style="left:1004px;top:50px" width="17" height="15"><g fill="none" stroke="#60a8ff"><rect x="0.5" y="0.5" width="15" height="13"/><rect x="3.5" y="3.5" width="9" height="7"/></g></svg>
<div class="a" style="left:789px;top:72px;width:233px;height:1px;border-top:1px dotted #d00000"></div>
<div class="a" style="left:789px;top:93px;width:233px;height:1px;border-top:1px dotted #d00000"></div>
<div class="a" style="left:789px;top:114px;width:233px;height:1px;border-top:1px dotted #d00000"></div>
<div class="a" style="left:789px;top:235px;width:233px;height:1px;border-top:1px dotted #d00000"></div>
<div class="a" style="left:789px;top:256px;width:233px;height:1px;border-top:1px dotted #d00000"></div>
<div class="a" style="left:1020px;top:66px;width:1px;height:190px;border-left:1px dotted #d00000"></div>
<div class="rp" style="left:794px;top:75px;color:#f0f0f0">卖出</div>
<div class="rv" style="left:834px;width:60px;top:75px;color:#00e000">1.3886</div>
<div class="rv" style="left:946px;width:70px;top:75px;color:#f0f000">1329</div>
<div class="rp" style="left:794px;top:96px;color:#f0f0f0">买入</div>
<div class="rv" style="left:834px;width:60px;top:96px;color:#00e000">1.3882</div>
<div class="rv" style="left:946px;width:70px;top:96px;color:#f0f000">0</div>
<div class="rp" style="left:794px;top:117px;color:#f0f0f0">最新</div>
<div class="rv" style="left:834px;width:60px;top:117px;color:#00e000">1.3882</div>
<div class="rp" style="left:915px;top:117px;color:#f0f0f0">均价</div>
<div class="rv" style="left:946px;width:70px;top:117px;color:#f0f0f0">0.0000</div>
<div class="rp" style="left:794px;top:137px;color:#f0f0f0">涨跌</div>
<div class="rv" style="left:834px;width:60px;top:137px;color:#00e000">-0.0037</div>
<div class="rp" style="left:915px;top:137px;color:#f0f0f0">昨收</div>
<div class="rv" style="left:946px;width:70px;top:137px;color:#f0f0f0">1.3919</div>
<div class="rp" style="left:794px;top:157px;color:#f0f0f0">幅度</div>
<div class="rv" style="left:834px;width:60px;top:157px;color:#00e000">-0.27%</div>
<div class="rp" style="left:915px;top:157px;color:#f0f0f0">开盘</div>
<div class="rv" style="left:946px;width:70px;top:157px;color:#ff4040">1.3920</div>
<div class="rp" style="left:794px;top:177px;color:#f0f0f0">总手</div>
<div class="rv" style="left:834px;width:60px;top:177px;color:#f0f000">0</div>
<div class="rp" style="left:915px;top:177px;color:#f0f0f0">最高</div>
<div class="rv" style="left:946px;width:70px;top:177px;color:#ff4040">1.3969</div>
<div class="rp" style="left:794px;top:197px;color:#f0f0f0">现手</div>
<div class="rv" style="left:834px;width:60px;top:197px;color:#f0f000">0</div>
<div class="rp" style="left:915px;top:197px;color:#f0f0f0">最低</div>
<div class="rv" style="left:946px;width:70px;top:197px;color:#00e000">1.3859</div>
<div class="rp" style="left:794px;top:217px;color:#f0f0f0">金额</div>
<div class="rv" style="left:834px;width:60px;top:217px;color:#f0f000">0.00</div>
<div class="rp" style="left:915px;top:217px;color:#f0f0f0">量比</div>
<div class="rv" style="left:946px;width:70px;top:217px;color:#f0f0f0">1.00</div>
<div class="rp" style="left:794px;top:238px;color:#f0f0f0">外盘</div>
<div class="rv" style="left:834px;width:60px;top:238px;color:#ff4040">---</div>
<div class="rp" style="left:915px;top:238px;color:#f0f0f0">内盘</div>
<div class="rv" style="left:946px;width:70px;top:238px;color:#00e000">---</div>
<div class="rp" style="left:794px;top:260px;color:#a0a0a0">北京</div>
<div class="rp" style="left:891px;top:260px;color:#a0a0a0">价格</div>
<div class="rp" style="left:974px;top:260px;color:#a0a0a0">现手</div>
<div class="rt" style="left:794px;top:283px;color:#f0f0f0">16:28</div>
<div class="rv" style="left:856px;width:60px;top:283px;color:#00e000">1.3879</div>
<div class="rv" style="left:958px;width:40px;top:283px;color:#00e000">0</div>
<div class="rt" style="left:794px;top:305px;color:#f0f0f0">16:28</div>
<div class="rv" style="left:856px;width:60px;top:305px;color:#00e000">1.3878</div>
<div class="rv" style="left:958px;width:40px;top:305px;color:#00e000">0</div>
<div class="rt" style="left:794px;top:327px;color:#f0f0f0">16:28</div>
<div class="rv" style="left:856px;width:60px;top:327px;color:#00e000">1.3877</div>
<div class="rv" style="left:958px;width:40px;top:327px;color:#00e000">0</div>
<div class="rt" style="left:794px;top:349px;color:#f0f0f0">16:28</div>
<div class="rv" style="left:856px;width:60px;top:349px;color:#00e000">1.3878</div>
<div class="rv" style="left:958px;width:40px;top:349px;color:#f0f0f0">0</div>
<div class="rt" style="left:794px;top:371px;color:#f0f0f0">16:29</div>
<div class="rv" style="left:856px;width:60px;top:371px;color:#00e000">1.3881</div>
<div class="rv" style="left:958px;width:40px;top:371px;color:#f0f0f0">0</div>
<div class="rt" style="left:794px;top:393px;color:#f0f0f0">16:29</div>
<div class="rv" style="left:856px;width:60px;top:393px;color:#00e000">1.3882</div>
<div class="rv" style="left:958px;width:40px;top:393px;color:#f0f0f0">0</div>
<div class="rt" style="left:794px;top:415px;color:#f0f0f0">16:29</div>
<div class="rv" style="left:856px;width:60px;top:415px;color:#00e000">1.3879</div>
<div class="rv" style="left:958px;width:40px;top:415px;color:#00e000">0</div>
<div class="rt" style="left:794px;top:437px;color:#f0f0f0">16:29</div>
<div class="rv" style="left:856px;width:60px;top:437px;color:#00e000">1.3880</div>
<div class="rv" style="left:958px;width:40px;top:437px;color:#f0f0f0">0</div>
<div class="rt" style="left:794px;top:459px;color:#f0f0f0">16:29</div>
<div class="rv" style="left:856px;width:60px;top:459px;color:#00e000">1.3881</div>
<div class="rv" style="left:958px;width:40px;top:459px;color:#f0f0f0">0</div>
<div class="rt" style="left:794px;top:481px;color:#f0f0f0">16:30</div>
<div class="rv" style="left:856px;width:60px;top:481px;color:#00e000">1.3879</div>
<div class="rv" style="left:958px;width:40px;top:481px;color:#00e000">0</div>
<div class="rt" style="left:794px;top:503px;color:#f0f0f0">16:30</div>
<div class="rv" style="left:856px;width:60px;top:503px;color:#00e000">1.3881</div>
<div class="rv" style="left:958px;width:40px;top:503px;color:#f0f0f0">0</div>
<div class="rt" style="left:794px;top:525px;color:#f0f0f0">16:30</div>
<div class="rv" style="left:856px;width:60px;top:525px;color:#00e000">1.3882</div>
<div class="rv" style="left:958px;width:40px;top:525px;color:#f0f0f0">0</div>
<div class="rt" style="left:794px;top:547px;color:#f0f0f0">16:30</div>
<div class="rv" style="left:856px;width:60px;top:547px;color:#00e000">1.3883</div>
<div class="rv" style="left:958px;width:40px;top:547px;color:#f0f0f0">0</div>
<div class="rt" style="left:794px;top:569px;color:#f0f0f0">16:30</div>
<div class="rv" style="left:856px;width:60px;top:569px;color:#00e000">1.3882</div>
<div class="rv" style="left:958px;width:40px;top:569px;color:#00e000">0</div>
<div class="rt" style="left:794px;top:591px;color:#f0f0f0">16:30</div>
<div class="rv" style="left:856px;width:60px;top:591px;color:#00e000">1.3881</div>
<div class="rv" style="left:958px;width:40px;top:591px;color:#00e000">0</div>
<div class="rt" style="left:794px;top:613px;color:#f0f0f0">16:31</div>
<div class="rv" style="left:856px;width:60px;top:613px;color:#00e000">1.3882</div>
<div class="rv" style="left:958px;width:40px;top:613px;color:#ff4040">0</div>
<div class="rt" style="left:794px;top:635px;color:#f0f0f0">16:31</div>
<div class="rv" style="left:856px;width:60px;top:635px;color:#00e000">1.3881</div>
<div class="rv" style="left:958px;width:40px;top:635px;color:#ff4040">0</div>
<div class="rt" style="left:794px;top:657px;color:#f0f0f0">16:31</div>
<div class="rv" style="left:856px;width:60px;top:657px;color:#00e000">1.3882</div>
<div class="rv" style="left:958px;width:40px;top:657px;color:#ff4040">0</div>
<div class="rt" style="left:794px;top:679px;color:#f0f0f0">16:31</div>
<div class="rv" style="left:856px;width:60px;top:679px;color:#00e000">1.3883</div>
<div class="rv" style="left:958px;width:40px;top:679px;color:#ff4040">0</div>
<div class="rt" style="left:794px;top:701px;color:#f0f0f0">16:31</div>
<div class="rv" style="left:856px;width:60px;top:701px;color:#00e000">1.3881</div>
<div class="rv" style="left:958px;width:40px;top:701px;color:#ff4040">0</div>
<div class="rt" style="left:794px;top:723px;color:#f0f0f0">16:31</div>
<div class="rv" style="left:856px;width:60px;top:723px;color:#00e000">1.3882</div>
<div class="rv" style="left:958px;width:40px;top:723px;color:#ff4040">0</div>
<div class="a" style="left:1004px;top:257px;width:18px;height:483px;background:#e6e6ee"></div>
<svg class="a" style="left:1004px;top:257px" width="18" height="17"><rect x="0.5" y="0.5" width="16" height="16" rx="2" fill="#c8d4f4" stroke="#fff"/><path d="M4.5 10.5 L8.5 6.5 L12.5 10.5" fill="none" stroke="#4d6185" stroke-width="2"/></svg>
<svg class="a" style="left:1004px;top:708px" width="18" height="32"><rect x="0.5" y="0.5" width="16" height="15" rx="2" fill="#c8d4f4" stroke="#fff"/><path d="M5 5.5h7M5 7.5h7M5 9.5h7M5 11.5h7" stroke="#a0b0d8"/><rect x="0.5" y="16.5" width="16" height="15" rx="2" fill="#c8d4f4" stroke="#fff"/><path d="M4.5 21.5 L8.5 25.5 L12.5 21.5" fill="none" stroke="#4d6185" stroke-width="2"/></svg>
<div class="a" style="left:817px;top:305px;width:83px;height:283px;background:#7080d8;border:1px solid #5060c0"></div>
<div class="a" style="left:818px;top:306px;width:81px;height:20px;background:linear-gradient(180deg,#7c8ce0,#8c9ce8)"></div>
<div class="a" style="left:821px;top:307px;font-size:13px;line-height:17px;color:#fff;font-weight:bold">画线</div>
<div class="a" style="left:883px;top:310px;width:12px;height:12px;background:#b07888;border:1px solid #e8e0f0"></div>
<svg class="a" style="left:883px;top:310px" width="12" height="12"><path d="M3 3l6 6M9 3l-6 6" stroke="#fff" stroke-width="2"/></svg>
<div class="a" style="left:820px;top:326px;width:77px;height:259px;background:#f6f2e2"></div>
<svg class="a" style="left:823px;top:329px" width="20" height="20"><path d="M3 4L15 14" stroke="#000" stroke-width="1.1" fill="none"/></svg>
<svg class="a" style="left:849px;top:329px" width="20" height="20"><path d="M4 4L15 15" stroke="#000" stroke-width="1.1" fill="none"/><circle cx="4" cy="4" r="1.3"/><circle cx="15" cy="15" r="1.3"/></svg>
<svg class="a" style="left:875px;top:329px" width="20" height="20"><path d="M4 5L12 14M8 2L16 10" stroke="#000" stroke-width="1.1" fill="none"/></svg>
<svg class="a" style="left:823px;top:355px" width="20" height="20"><path d="M3 10H15M3 8V12" stroke="#000" stroke-width="1.1" fill="none"/></svg>
<svg class="a" style="left:849px;top:355px" width="20" height="20"><path d="M10 3V17M8 3H12" stroke="#000" stroke-width="1.1" fill="none"/></svg>
<svg class="a" style="left:875px;top:355px" width="20" height="20"><rect x="4.5" y="5.5" width="10" height="8" stroke="#000" stroke-width="1.1" fill="none"/></svg>
<svg class="a" style="left:823px;top:381px" width="20" height="20"><path d="M4 16L15 5" stroke="#000" stroke-width="1.1" fill="none"/><circle cx="4" cy="16" r="1.3"/></svg>
<svg class="a" style="left:849px;top:381px" width="20" height="20"><path d="M4 4L15 15" stroke="#000" stroke-width="1.1" fill="none"/><circle cx="4" cy="4" r="1.3"/></svg>
<svg class="a" style="left:875px;top:381px" width="20" height="20"><path d="M6 8C6 3 11 3 10 9C9 15 15 15 14 10" stroke="#000" stroke-width="1.1" fill="none"/></svg>
<svg class="a" style="left:823px;top:407px" width="20" height="20"><path d="M4.5 5.5H11A4.5 4.5 0 0 1 11 14.5H4.5" stroke="#000" stroke-width="1.1" fill="none"/></svg>
<svg class="a" style="left:849px;top:407px" width="20" height="20"><path d="M4.3 15.4H15.8M4.3 15.4L15.8 3.9" stroke="#000" stroke-width="1.1" fill="none"/><path d="M5 14.8L15 9" stroke="#1840b0" stroke-width="1.1"/></svg>
<svg class="a" style="left:875px;top:407px" width="20" height="20"><path d="M4.4 3.9V15.4H15.8M4.4 15.4L15.8 3.9" stroke="#000" stroke-width="1.1" fill="none"/><path d="M4.4 15.4L8 4M4.4 15.4L11 5M4.4 15.4L15.8 9M4.4 15.4L15.8 12" stroke="#1840b0" stroke-width="0.9"/></svg>
<svg class="a" style="left:823px;top:433px" width="20" height="20"><path d="M3.3 4H16.8M3.3 16.5H16.8" stroke="#000" stroke-width="1"/><path d="M9.5 6.6H16.8M9.5 8.7H16.8M9.5 10.8H16.8M3.3 12.9H16.8M3.3 14.7H16.8" stroke="#1840b0" stroke-width="1"/><text x="3" y="12.3" font-size="6.5" fill="#1840b0" font-weight="bold" font-family="Liberation Sans">G</text></svg>
<svg class="a" style="left:849px;top:433px" width="20" height="20"><path d="M3.3 4H16.8M3.3 16.5H16.8" stroke="#000" stroke-width="1"/><path d="M9.5 6.6H16.8M9.5 8.7H16.8M9.5 10.8H16.8M3.3 12.9H16.8M3.3 14.7H16.8" stroke="#1840b0" stroke-width="1"/><text x="3" y="11" font-size="6" fill="#1840b0" font-weight="bold" font-family="Liberation Sans">%</text></svg>
<svg class="a" style="left:875px;top:433px" width="20" height="20"><path d="M3.3 4H16.8M3.3 16.5H16.8" stroke="#000" stroke-width="1"/><path d="M9.5 6.6H16.8M9.5 8.7H16.8M9.5 10.8H16.8M3.3 12.9H16.8M3.3 14.7H16.8" stroke="#1840b0" stroke-width="1"/><text x="3" y="11" font-size="6" fill="#1840b0" font-weight="bold" font-family="Liberation Sans">%</text></svg>
<svg class="a" style="left:823px;top:459px" width="20" height="20"><path d="M7.4 4V16M11.6 4V16M15.75 4V16" stroke="#000" stroke-width="1"/><path d="M4.3 4V16" stroke="#1840b0" stroke-width="1"/></svg>
<svg class="a" style="left:849px;top:459px" width="20" height="20"><path d="M5.4 4V16M9.5 4V16M12.7 4V16M16.8 4V16" stroke="#000" stroke-width="1"/><path d="M3.3 4V16" stroke="#1840b0" stroke-width="1"/></svg>
<svg class="a" style="left:875px;top:459px" width="20" height="20"><path d="M4.4 4V16M15.8 4V16" stroke="#000" stroke-width="1"/><path d="M4.4 15L15.8 9.8M4.4 11L15.8 5.6" stroke="#1840b0" stroke-width="1"/></svg>
<svg class="a" style="left:823px;top:485px" width="20" height="20"><path d="M4.5 4.4V15.3M12.6 4.4V15.3" stroke="#000" stroke-width="1"/><path d="M4.8 10.6L14.7 5.4M4.8 15.3L14.7 10.6" stroke="#1840b0" stroke-width="1"/></svg>
<svg class="a" style="left:849px;top:485px" width="20" height="20"><text x="4.2" y="15.5" font-size="14" fill="#000" font-family="Liberation Sans" textLength="10.5">A</text></svg>
<svg class="a" style="left:875px;top:485px" width="20" height="20"><circle cx="10" cy="9.6" r="7.2" fill="#c8ccd8" stroke="#8890a8" stroke-width="1.2"/><circle cx="10" cy="9.6" r="4.6" fill="#eef" stroke="#e02020" stroke-width="1.3" stroke-dasharray="1.5 1"/></svg>
<svg class="a" style="left:823px;top:511px" width="20" height="20"><path d="M10 4.5L15.2 10H12.5V15.5H7.5V10H4.8Z" fill="#f02818" stroke="#000" stroke-width="0.7"/></svg>
<svg class="a" style="left:849px;top:511px" width="20" height="20"><path d="M10 4.5L15.2 10H12.5V15.5H7.5V10H4.8Z" fill="#f02818" stroke="#000" stroke-width="0.7" transform="rotate(45 10 10)"/></svg>
<svg class="a" style="left:875px;top:511px" width="20" height="20"><path d="M10 4.5L15.2 10H12.5V15.5H7.5V10H4.8Z" fill="#f02818" stroke="#000" stroke-width="0.7" transform="rotate(-45 10 10)"/></svg>
<svg class="a" style="left:823px;top:537px" width="20" height="20"><path d="M10 4.5L15.2 10H12.5V15.5H7.5V10H4.8Z" fill="#78b838" stroke="#000" stroke-width="0.7" transform="rotate(180 10 10)"/></svg>
<svg class="a" style="left:849px;top:537px" width="20" height="20"><path d="M10 4.5L15.2 10H12.5V15.5H7.5V10H4.8Z" fill="#78b838" stroke="#000" stroke-width="0.7" transform="rotate(135 10 10)"/></svg>
<svg class="a" style="left:875px;top:537px" width="20" height="20"><path d="M10 4.5L15.2 10H12.5V15.5H7.5V10H4.8Z" fill="#78b838" stroke="#000" stroke-width="0.7" transform="rotate(-135 10 10)"/></svg>
<svg class="a" style="left:823px;top:563px" width="20" height="20"><path d="M3 14L10 8H17L11 14Z" fill="#f0e040" stroke="#605010"/><path d="M3 14H11L17 10" fill="none" stroke="#404040"/></svg>
<svg class="a" style="left:861px;top:563px" width="20" height="20"><path d="M3 8H11M3 8L6 5M3 8L6 11" stroke="#1850c0" stroke-width="2" fill="none"/><rect x="4" y="11" width="7" height="3" fill="#e03020"/><path d="M13 3H17M13 6H17M13 9H17M13 12H17M13 15H17" stroke="#000"/></svg>
<div id="status"></div>
<div class="st" style="left:2px;color:#1838d8;-webkit-text-stroke:0.4px #1838d8">沪</div>
<div class="st" style="left:25px;color:#108010">2975.04</div>
<div class="st" style="left:93px;color:#108010">-8.49</div>
<div class="st" style="left:125px;color:#000;-webkit-text-stroke:0.3px #000">1972.1亿</div>
<div class="st" style="left:188px;color:#1838d8;-webkit-text-stroke:0.4px #1838d8">深</div>
<div class="st" style="left:207px;color:#f01818">13224.98</div>
<div class="st" style="left:272px;color:#f01818">113.46</div>
<div class="st" style="left:313px;color:#000;-webkit-text-stroke:0.3px #000">1558.0亿</div>
<div class="a" style="left:366px;top:753px;width:1px;height:15px;background:#909090"></div>
<div class="st" style="left:369px;color:#000;font-weight:normal;font-size:12px">原油明年均价约为83美元</div>
<div class="st" style="left:537px;color:#000;font-weight:normal;font-size:12px">〖股指期货〗恒生指数及期货指数10月22日收盘报价</div>
<div class="a" style="left:830px;top:753px;width:1px;height:15px;background:#909090"></div>
<div class="a" style="left:833px;top:753px;width:81px;height:14px;background:#0018f0"></div>
<svg class="a" style="left:835px;top:753px" width="40" height="15"><path d="M1 13L6 3L11 13Z" fill="#f0f000"/><text x="13" y="13" font-size="13" font-weight="bold" fill="#f0f000" font-family="Liberation Sans">1</text></svg>
<div class="st" style="left:918px;color:#1830e0;font-size:14px;letter-spacing:0.3px">pob<span style="color:#f01818">o</span></div>
<div class="a" style="left:954px;top:753px;width:1px;height:15px;background:#909090"></div>
<svg class="a" style="left:960px;top:753px" width="24" height="15"><path d="M1 2H10L6 7Z" fill="#1838d8"/><path d="M5.5 6V14" stroke="#1838d8" stroke-width="2"/><rect x="11" y="11" width="2" height="3" fill="#1838d8"/><rect x="15" y="7" width="2" height="7" fill="#1838d8"/><rect x="19" y="3" width="2" height="11" fill="#1838d8"/></svg>
<div class="a" style="left:985px;top:753px;width:1px;height:15px;background:#909090"></div>
<div class="a" style="left:989px;top:753px;font-size:14px;line-height:15px;color:#1838d8">16:31</div>
</body></html>
